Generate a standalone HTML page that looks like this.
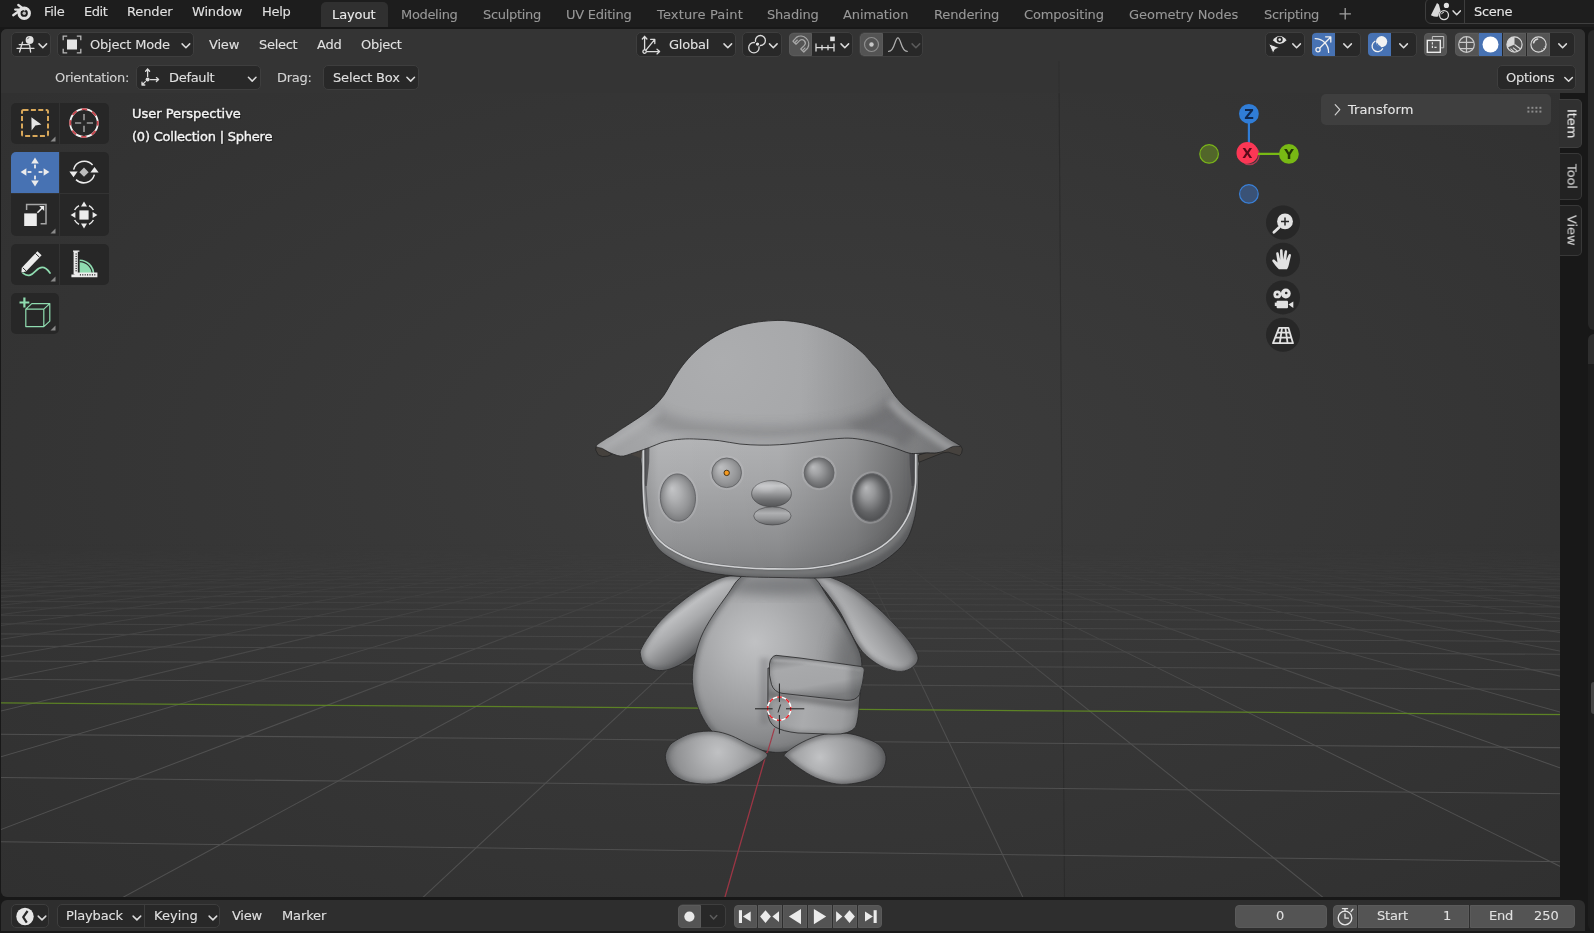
<!DOCTYPE html>
<html lang="en"><head><meta charset="utf-8"><title>Blender</title>
<style>
*{box-sizing:border-box;margin:0;padding:0}
html,body{width:1594px;height:933px;overflow:hidden;background:#181818}
body{position:relative;font-family:"DejaVu Sans","Liberation Sans",sans-serif;font-size:13px;color:#e0e0e0;line-height:16px;letter-spacing:-.1px}
.a{position:absolute}
.t{position:absolute;white-space:nowrap;height:16px;line-height:16px;will-change:transform;-webkit-text-stroke:.1px currentColor}
.dim{color:#989898}
.btn{position:absolute;background:#282828;border:1px solid #3e3e3e;border-radius:5px}
.lbtn{position:absolute;background:#545454;border:1px solid #5a5a5a}
.blue{position:absolute;background:#4772b3}
svg{position:absolute;overflow:visible}
.ic{fill:none;stroke:#dcdcdc;stroke-width:1.3;stroke-linecap:round;stroke-linejoin:round}
.chev{fill:none;stroke:#dcdcdc;stroke-width:1.5;stroke-linecap:round;stroke-linejoin:round}
#vp{position:absolute;left:1px;top:29px;width:1584px;height:868px;border-radius:6px;background:radial-gradient(#3d3d3d,#303030);overflow:hidden}
#tl{position:absolute;left:1px;top:900px;width:1584px;height:31px;border-radius:6px 6px 0 0;background:#2e2e2e;overflow:hidden}
.tool{position:absolute;background:#272727}
</style></head><body>
<div class="a" style="left:0;top:0;width:1594px;height:26.6px;background:#1d1d1d"></div>
<svg style="left:11px;top:2px" width="22" height="19" viewBox="0 0 22 19">
<g fill="none" stroke="#e0e0e0" stroke-linecap="round">
<circle cx="13.2" cy="11.2" r="5.2" stroke-width="3.1"/>
<path d="M2.2 13.2 L10.5 7.2 M4.2 7.6 L11 7.6 M7.3 3.0 L13.6 7.6" stroke-width="2.3"/>
</g><circle cx="13.2" cy="11.2" r="1.7" fill="#bdbdbd"/></svg>
<div class="t " style="left:44.1px;top:3.5px;letter-spacing:-0.316px;">File</div>
<div class="t " style="left:84.0px;top:3.5px;letter-spacing:-0.447px;">Edit</div>
<div class="t " style="left:126.9px;top:3.5px;letter-spacing:-0.130px;">Render</div>
<div class="t " style="left:191.9px;top:3.5px;letter-spacing:-0.178px;">Window</div>
<div class="t " style="left:261.9px;top:3.5px;letter-spacing:-0.285px;">Help</div>
<div class="a" style="left:320.8px;top:2px;width:67.2px;height:24.8px;background:#303030;border-radius:5px 5px 0 0"></div>
<div class="t " style="left:331.9px;top:6.5px;letter-spacing:-0.117px;color:#ececec">Layout</div>
<div class="t dim" style="left:401.0px;top:6.5px;letter-spacing:-0.330px;">Modeling</div>
<div class="t dim" style="left:482.8px;top:6.5px;letter-spacing:-0.300px;">Sculpting</div>
<div class="t dim" style="left:565.9px;top:6.5px;letter-spacing:-0.233px;">UV Editing</div>
<div class="t dim" style="left:656.5px;top:6.5px;letter-spacing:0.155px;">Texture Paint</div>
<div class="t dim" style="left:767.4px;top:6.5px;letter-spacing:-0.188px;">Shading</div>
<div class="t dim" style="left:843.4px;top:6.5px;letter-spacing:-0.109px;">Animation</div>
<div class="t dim" style="left:933.6px;top:6.5px;letter-spacing:-0.132px;">Rendering</div>
<div class="t dim" style="left:1023.7px;top:6.5px;letter-spacing:-0.155px;">Compositing</div>
<div class="t dim" style="left:1128.6px;top:6.5px;letter-spacing:-0.033px;">Geometry Nodes</div>
<div class="t dim" style="left:1263.6px;top:6.5px;letter-spacing:-0.312px;">Scripting</div>
<svg style="left:0;top:0" width="1" height="1"><path d="M1339.5 13.8h11.4M1345.2 8.1v11.4" stroke="#a0a0a0" stroke-width="1.3" fill="none"/></svg>
<div class="a" style="left:1425.4px;top:-2px;width:180px;height:25.8px;background:#1e1e1e;border:1px solid #3e3e3e;border-radius:6px"></div>
<div class="a" style="left:1464.2px;top:0;width:1px;height:23px;background:#3e3e3e"></div>
<svg style="left:0;top:0" width="1" height="1">
<path d="M1437 3 L1438.9 4.6 L1440.6 11 Q1438.6 12.4 1438.3 16.2 Q1436 17.6 1430.9 15.2 Z" fill="#dadada"/>
<circle cx="1446.4" cy="5.4" r="2.6" fill="#e2e2e2"/>
<circle cx="1444" cy="15.1" r="4.5" fill="#1e1e1e" stroke="#dadada" stroke-width="1.3"/>
<path d="M1441.6 14.2 a2.6 2.6 0 0 1 2.3 -2" stroke="#dadada" stroke-width="1" fill="none"/></svg>
<svg class="a" style="left:0;top:0" width="1" height="1"><path class="chev" style="" d="M1453.1 10.9 l3.6 3.8 l3.6 -3.8"/></svg>
<div class="t " style="left:1474.1px;top:3.7px;letter-spacing:-0.268px;color:#e6e6e6">Scene</div><div id="vp"><svg style="left:-1px;top:-29px" width="1594" height="933" viewBox="0 0 1594 933">
<defs>
<linearGradient id="gfg" gradientUnits="userSpaceOnUse" x1="0" y1="515" x2="0" y2="760"><stop offset="0" stop-color="#000"/><stop offset=".12" stop-color="#000"/><stop offset=".19" stop-color="#161616"/><stop offset=".35" stop-color="#5c5c5c"/><stop offset=".56" stop-color="#b4b4b4"/><stop offset=".85" stop-color="#fff"/></linearGradient>
<mask id="gfade" maskUnits="userSpaceOnUse" x="0" y="500" width="1594" height="433"><rect x="0" y="500" width="1594" height="433" fill="url(#gfg)"/></mask>
<mask id="gfade2" maskUnits="userSpaceOnUse" x="0" y="500" width="1594" height="433"><rect x="0" y="500" width="1594" height="433" fill="url(#gfg)"/></mask>
</defs>
<line x1="1058.9" y1="61" x2="1064.5" y2="897" stroke="#262626" stroke-width="1.1" opacity=".6"/>
<g stroke="#505050" stroke-width="1.05" mask="url(#gfade)"><line x1="776.2" y1="511.4" x2="-20.0" y2="524.2"/><line x1="777.0" y1="511.4" x2="-20.0" y2="524.4"/><line x1="777.7" y1="511.4" x2="-20.0" y2="524.6"/><line x1="778.5" y1="511.4" x2="-20.0" y2="524.7"/><line x1="779.3" y1="511.4" x2="-20.0" y2="524.9"/><line x1="780.1" y1="511.4" x2="-20.0" y2="525.1"/><line x1="780.8" y1="511.4" x2="-20.0" y2="525.3"/><line x1="781.6" y1="511.4" x2="-20.0" y2="525.5"/><line x1="782.4" y1="511.4" x2="-20.0" y2="525.7"/><line x1="783.2" y1="511.4" x2="-20.0" y2="525.9"/><line x1="783.9" y1="511.4" x2="-20.0" y2="526.2"/><line x1="784.7" y1="511.4" x2="-20.0" y2="526.4"/><line x1="785.5" y1="511.4" x2="-20.0" y2="526.6"/><line x1="786.3" y1="511.4" x2="-20.0" y2="526.9"/><line x1="787.0" y1="511.4" x2="-20.0" y2="527.1"/><line x1="787.8" y1="511.4" x2="-20.0" y2="527.4"/><line x1="788.6" y1="511.4" x2="-20.0" y2="527.6"/><line x1="789.4" y1="511.4" x2="-20.0" y2="527.9"/><line x1="790.1" y1="511.4" x2="-20.0" y2="528.2"/><line x1="790.9" y1="511.4" x2="-20.0" y2="528.5"/><line x1="791.7" y1="511.4" x2="-20.0" y2="528.8"/><line x1="792.5" y1="511.4" x2="-20.0" y2="529.1"/><line x1="793.2" y1="511.4" x2="-20.0" y2="529.4"/><line x1="794.0" y1="511.4" x2="-20.0" y2="529.7"/><line x1="794.8" y1="511.4" x2="-20.0" y2="530.1"/><line x1="795.6" y1="511.4" x2="-20.0" y2="530.4"/><line x1="796.3" y1="511.4" x2="-20.0" y2="530.8"/><line x1="797.1" y1="511.4" x2="-20.0" y2="531.2"/><line x1="797.9" y1="511.4" x2="-20.0" y2="531.6"/><line x1="798.7" y1="511.4" x2="-20.0" y2="532.0"/><line x1="799.4" y1="511.4" x2="-20.0" y2="532.4"/><line x1="800.2" y1="511.4" x2="-20.0" y2="532.9"/><line x1="801.0" y1="511.4" x2="-20.0" y2="533.3"/><line x1="801.8" y1="511.4" x2="-20.0" y2="533.8"/><line x1="802.5" y1="511.4" x2="-20.0" y2="534.3"/><line x1="803.3" y1="511.4" x2="-20.0" y2="534.8"/><line x1="804.1" y1="511.4" x2="-20.0" y2="535.4"/><line x1="804.9" y1="511.4" x2="-20.0" y2="536.0"/><line x1="805.6" y1="511.4" x2="-20.0" y2="536.6"/><line x1="806.4" y1="511.4" x2="-20.0" y2="537.2"/><line x1="807.2" y1="511.4" x2="-20.0" y2="537.8"/><line x1="808.0" y1="511.4" x2="-20.0" y2="538.5"/><line x1="808.7" y1="511.4" x2="-20.0" y2="539.3"/><line x1="809.5" y1="511.4" x2="-20.0" y2="540.0"/><line x1="810.3" y1="511.4" x2="-20.0" y2="540.9"/><line x1="811.1" y1="511.4" x2="-20.0" y2="541.7"/><line x1="811.8" y1="511.4" x2="-20.0" y2="542.6"/><line x1="812.6" y1="511.4" x2="-20.0" y2="543.6"/><line x1="813.4" y1="511.4" x2="-20.0" y2="544.6"/><line x1="814.2" y1="511.4" x2="-20.0" y2="545.7"/><line x1="815.0" y1="511.4" x2="-20.0" y2="546.9"/><line x1="815.7" y1="511.4" x2="-20.0" y2="548.1"/><line x1="816.5" y1="511.4" x2="-20.0" y2="549.4"/><line x1="817.3" y1="511.4" x2="-20.0" y2="550.9"/><line x1="818.1" y1="511.4" x2="-20.0" y2="552.4"/><line x1="818.8" y1="511.4" x2="-20.0" y2="554.0"/><line x1="819.6" y1="511.4" x2="-20.0" y2="555.8"/><line x1="820.4" y1="511.4" x2="-20.0" y2="557.8"/><line x1="821.2" y1="511.4" x2="-20.0" y2="559.9"/><line x1="821.9" y1="511.4" x2="-20.0" y2="562.2"/><line x1="822.7" y1="511.4" x2="-20.0" y2="564.7"/><line x1="823.5" y1="511.4" x2="-20.0" y2="567.5"/><line x1="824.3" y1="511.4" x2="-20.0" y2="570.7"/><line x1="825.0" y1="511.4" x2="-20.0" y2="574.1"/><line x1="825.8" y1="511.4" x2="-20.0" y2="578.0"/><line x1="826.6" y1="511.4" x2="-20.0" y2="582.4"/><line x1="827.4" y1="511.4" x2="-20.0" y2="587.4"/><line x1="828.1" y1="511.4" x2="-20.0" y2="593.2"/><line x1="828.9" y1="511.4" x2="-20.0" y2="599.8"/><line x1="829.7" y1="511.4" x2="-20.0" y2="607.7"/><line x1="830.5" y1="511.4" x2="-20.0" y2="617.1"/><line x1="831.2" y1="511.4" x2="-20.0" y2="628.4"/><line x1="832.0" y1="511.4" x2="-20.0" y2="642.5"/><line x1="832.8" y1="511.4" x2="-20.0" y2="660.4"/><line x1="833.6" y1="511.4" x2="-20.0" y2="683.8"/><line x1="834.3" y1="511.4" x2="-20.0" y2="716.0"/><line x1="835.1" y1="511.4" x2="-20.0" y2="762.9"/><line x1="835.9" y1="511.4" x2="-20.0" y2="837.5"/><line x1="836.7" y1="511.4" x2="7.1" y2="960.0"/><line x1="837.4" y1="511.4" x2="355.7" y2="960.0"/><line x1="839.0" y1="511.4" x2="1052.8" y2="960.0"/><line x1="839.8" y1="511.4" x2="1401.4" y2="960.0"/><line x1="840.5" y1="511.4" x2="1620.0" y2="895.9"/><line x1="841.3" y1="511.4" x2="1620.0" y2="789.3"/><line x1="842.1" y1="511.4" x2="1620.0" y2="728.8"/><line x1="842.9" y1="511.4" x2="1620.0" y2="689.9"/><line x1="843.6" y1="511.4" x2="1620.0" y2="662.8"/><line x1="844.4" y1="511.4" x2="1620.0" y2="642.8"/><line x1="845.2" y1="511.4" x2="1620.0" y2="627.4"/><line x1="846.0" y1="511.4" x2="1620.0" y2="615.3"/><line x1="846.7" y1="511.4" x2="1620.0" y2="605.4"/><line x1="847.5" y1="511.4" x2="1620.0" y2="597.2"/><line x1="848.3" y1="511.4" x2="1620.0" y2="590.3"/><line x1="849.1" y1="511.4" x2="1620.0" y2="584.5"/><line x1="849.8" y1="511.4" x2="1620.0" y2="579.4"/><line x1="850.6" y1="511.4" x2="1620.0" y2="575.0"/><line x1="851.4" y1="511.4" x2="1620.0" y2="571.1"/><line x1="852.2" y1="511.4" x2="1620.0" y2="567.7"/><line x1="852.9" y1="511.4" x2="1620.0" y2="564.6"/><line x1="853.7" y1="511.4" x2="1620.0" y2="561.8"/><line x1="854.5" y1="511.4" x2="1620.0" y2="559.3"/><line x1="855.3" y1="511.4" x2="1620.0" y2="557.1"/><line x1="856.0" y1="511.4" x2="1620.0" y2="555.0"/><line x1="856.8" y1="511.4" x2="1620.0" y2="553.1"/><line x1="857.6" y1="511.4" x2="1620.0" y2="551.4"/><line x1="858.4" y1="511.4" x2="1620.0" y2="549.8"/><line x1="859.1" y1="511.4" x2="1620.0" y2="548.3"/><line x1="859.9" y1="511.4" x2="1620.0" y2="546.9"/><line x1="860.7" y1="511.4" x2="1620.0" y2="545.7"/><line x1="861.5" y1="511.4" x2="1620.0" y2="544.5"/><line x1="862.2" y1="511.4" x2="1620.0" y2="543.4"/><line x1="863.0" y1="511.4" x2="1620.0" y2="542.3"/><line x1="863.8" y1="511.4" x2="1620.0" y2="541.3"/><line x1="864.6" y1="511.4" x2="1620.0" y2="540.4"/><line x1="865.3" y1="511.4" x2="1620.0" y2="539.5"/><line x1="866.1" y1="511.4" x2="1620.0" y2="538.7"/><line x1="866.9" y1="511.4" x2="1620.0" y2="538.0"/><line x1="867.7" y1="511.4" x2="1620.0" y2="537.2"/><line x1="868.4" y1="511.4" x2="1620.0" y2="536.5"/><line x1="869.2" y1="511.4" x2="1620.0" y2="535.9"/><line x1="870.0" y1="511.4" x2="1620.0" y2="535.2"/><line x1="870.8" y1="511.4" x2="1620.0" y2="534.6"/><line x1="871.5" y1="511.4" x2="1620.0" y2="534.1"/><line x1="872.3" y1="511.4" x2="1620.0" y2="533.5"/><line x1="873.1" y1="511.4" x2="1620.0" y2="533.0"/><line x1="873.9" y1="511.4" x2="1620.0" y2="532.5"/><line x1="874.7" y1="511.4" x2="1620.0" y2="532.1"/><line x1="875.4" y1="511.4" x2="1620.0" y2="531.6"/><line x1="876.2" y1="511.4" x2="1620.0" y2="531.2"/><line x1="877.0" y1="511.4" x2="1620.0" y2="530.7"/><line x1="877.8" y1="511.4" x2="1620.0" y2="530.3"/><line x1="878.5" y1="511.4" x2="1620.0" y2="530.0"/><line x1="879.3" y1="511.4" x2="1620.0" y2="529.6"/><line x1="880.1" y1="511.4" x2="1620.0" y2="529.2"/><line x1="880.9" y1="511.4" x2="1620.0" y2="528.9"/><line x1="881.6" y1="511.4" x2="1620.0" y2="528.6"/><line x1="882.4" y1="511.4" x2="1620.0" y2="528.2"/><line x1="883.2" y1="511.4" x2="1620.0" y2="527.9"/><line x1="884.0" y1="511.4" x2="1620.0" y2="527.6"/><line x1="884.7" y1="511.4" x2="1620.0" y2="527.3"/><line x1="885.5" y1="511.4" x2="1620.0" y2="527.1"/><line x1="886.3" y1="511.4" x2="1620.0" y2="526.8"/><line x1="887.1" y1="511.4" x2="1620.0" y2="526.5"/><line x1="887.8" y1="511.4" x2="1620.0" y2="526.3"/><line x1="888.6" y1="511.4" x2="1620.0" y2="526.0"/><line x1="889.4" y1="511.4" x2="1620.0" y2="525.8"/><line x1="890.2" y1="511.4" x2="1620.0" y2="525.6"/><line x1="890.9" y1="511.4" x2="1620.0" y2="525.3"/><line x1="891.7" y1="511.4" x2="1620.0" y2="525.1"/><line x1="892.5" y1="511.4" x2="1620.0" y2="524.9"/><line x1="893.3" y1="511.4" x2="1620.0" y2="524.7"/><line x1="894.0" y1="511.4" x2="1620.0" y2="524.5"/><line x1="894.8" y1="511.4" x2="1620.0" y2="524.3"/><line x1="895.6" y1="511.4" x2="1620.0" y2="524.1"/><line x1="896.4" y1="511.4" x2="1620.0" y2="523.9"/><line x1="897.1" y1="511.4" x2="1620.0" y2="523.8"/><line x1="897.9" y1="511.4" x2="1620.0" y2="523.6"/><line x1="898.7" y1="511.4" x2="1620.0" y2="523.4"/><line x1="899.5" y1="511.4" x2="1620.0" y2="523.3"/><line x1="900.2" y1="511.4" x2="1620.0" y2="523.1"/><line x1="-20.0" y1="517.1" x2="1620.0" y2="517.5"/><line x1="-20.0" y1="517.1" x2="1620.0" y2="517.5"/><line x1="-20.0" y1="517.1" x2="1620.0" y2="517.6"/><line x1="-20.0" y1="517.2" x2="1620.0" y2="517.6"/><line x1="-20.0" y1="517.2" x2="1620.0" y2="517.6"/><line x1="-20.0" y1="517.2" x2="1620.0" y2="517.7"/><line x1="-20.0" y1="517.3" x2="1620.0" y2="517.7"/><line x1="-20.0" y1="517.3" x2="1620.0" y2="517.7"/><line x1="-20.0" y1="517.3" x2="1620.0" y2="517.8"/><line x1="-20.0" y1="517.4" x2="1620.0" y2="517.8"/><line x1="-20.0" y1="517.4" x2="1620.0" y2="517.9"/><line x1="-20.0" y1="517.4" x2="1620.0" y2="517.9"/><line x1="-20.0" y1="517.5" x2="1620.0" y2="517.9"/><line x1="-20.0" y1="517.5" x2="1620.0" y2="518.0"/><line x1="-20.0" y1="517.6" x2="1620.0" y2="518.0"/><line x1="-20.0" y1="517.6" x2="1620.0" y2="518.0"/><line x1="-20.0" y1="517.6" x2="1620.0" y2="518.1"/><line x1="-20.0" y1="517.7" x2="1620.0" y2="518.1"/><line x1="-20.0" y1="517.7" x2="1620.0" y2="518.2"/><line x1="-20.0" y1="517.7" x2="1620.0" y2="518.2"/><line x1="-20.0" y1="517.8" x2="1620.0" y2="518.3"/><line x1="-20.0" y1="517.8" x2="1620.0" y2="518.3"/><line x1="-20.0" y1="517.9" x2="1620.0" y2="518.3"/><line x1="-20.0" y1="517.9" x2="1620.0" y2="518.4"/><line x1="-20.0" y1="517.9" x2="1620.0" y2="518.4"/><line x1="-20.0" y1="518.0" x2="1620.0" y2="518.5"/><line x1="-20.0" y1="518.0" x2="1620.0" y2="518.5"/><line x1="-20.0" y1="518.1" x2="1620.0" y2="518.6"/><line x1="-20.0" y1="518.1" x2="1620.0" y2="518.6"/><line x1="-20.0" y1="518.2" x2="1620.0" y2="518.6"/><line x1="-20.0" y1="518.2" x2="1620.0" y2="518.7"/><line x1="-20.0" y1="518.2" x2="1620.0" y2="518.7"/><line x1="-20.0" y1="518.3" x2="1620.0" y2="518.8"/><line x1="-20.0" y1="518.3" x2="1620.0" y2="518.8"/><line x1="-20.0" y1="518.4" x2="1620.0" y2="518.9"/><line x1="-20.0" y1="518.4" x2="1620.0" y2="518.9"/><line x1="-20.0" y1="518.5" x2="1620.0" y2="519.0"/><line x1="-20.0" y1="518.5" x2="1620.0" y2="519.0"/><line x1="-20.0" y1="518.6" x2="1620.0" y2="519.1"/><line x1="-20.0" y1="518.6" x2="1620.0" y2="519.1"/><line x1="-20.0" y1="518.7" x2="1620.0" y2="519.2"/><line x1="-20.0" y1="518.7" x2="1620.0" y2="519.2"/><line x1="-20.0" y1="518.8" x2="1620.0" y2="519.3"/><line x1="-20.0" y1="518.8" x2="1620.0" y2="519.3"/><line x1="-20.0" y1="518.9" x2="1620.0" y2="519.4"/><line x1="-20.0" y1="518.9" x2="1620.0" y2="519.5"/><line x1="-20.0" y1="519.0" x2="1620.0" y2="519.5"/><line x1="-20.0" y1="519.0" x2="1620.0" y2="519.6"/><line x1="-20.0" y1="519.1" x2="1620.0" y2="519.6"/><line x1="-20.0" y1="519.1" x2="1620.0" y2="519.7"/><line x1="-20.0" y1="519.2" x2="1620.0" y2="519.7"/><line x1="-20.0" y1="519.2" x2="1620.0" y2="519.8"/><line x1="-20.0" y1="519.3" x2="1620.0" y2="519.9"/><line x1="-20.0" y1="519.4" x2="1620.0" y2="519.9"/><line x1="-20.0" y1="519.4" x2="1620.0" y2="520.0"/><line x1="-20.0" y1="519.5" x2="1620.0" y2="520.1"/><line x1="-20.0" y1="519.5" x2="1620.0" y2="520.1"/><line x1="-20.0" y1="519.6" x2="1620.0" y2="520.2"/><line x1="-20.0" y1="519.7" x2="1620.0" y2="520.2"/><line x1="-20.0" y1="519.7" x2="1620.0" y2="520.3"/><line x1="-20.0" y1="519.8" x2="1620.0" y2="520.4"/><line x1="-20.0" y1="519.8" x2="1620.0" y2="520.4"/><line x1="-20.0" y1="519.9" x2="1620.0" y2="520.5"/><line x1="-20.0" y1="520.0" x2="1620.0" y2="520.6"/><line x1="-20.0" y1="520.0" x2="1620.0" y2="520.7"/><line x1="-20.0" y1="520.1" x2="1620.0" y2="520.7"/><line x1="-20.0" y1="520.2" x2="1620.0" y2="520.8"/><line x1="-20.0" y1="520.3" x2="1620.0" y2="520.9"/><line x1="-20.0" y1="520.3" x2="1620.0" y2="521.0"/><line x1="-20.0" y1="520.4" x2="1620.0" y2="521.0"/><line x1="-20.0" y1="520.5" x2="1620.0" y2="521.1"/><line x1="-20.0" y1="520.5" x2="1620.0" y2="521.2"/><line x1="-20.0" y1="520.6" x2="1620.0" y2="521.3"/><line x1="-20.0" y1="520.7" x2="1620.0" y2="521.3"/><line x1="-20.0" y1="520.8" x2="1620.0" y2="521.4"/><line x1="-20.0" y1="520.8" x2="1620.0" y2="521.5"/><line x1="-20.0" y1="520.9" x2="1620.0" y2="521.6"/><line x1="-20.0" y1="521.0" x2="1620.0" y2="521.7"/><line x1="-20.0" y1="521.1" x2="1620.0" y2="521.8"/><line x1="-20.0" y1="521.2" x2="1620.0" y2="521.9"/><line x1="-20.0" y1="521.3" x2="1620.0" y2="521.9"/><line x1="-20.0" y1="521.3" x2="1620.0" y2="522.0"/><line x1="-20.0" y1="521.4" x2="1620.0" y2="522.1"/><line x1="-20.0" y1="521.5" x2="1620.0" y2="522.2"/><line x1="-20.0" y1="521.6" x2="1620.0" y2="522.3"/><line x1="-20.0" y1="521.7" x2="1620.0" y2="522.4"/><line x1="-20.0" y1="521.8" x2="1620.0" y2="522.5"/><line x1="-20.0" y1="521.9" x2="1620.0" y2="522.6"/><line x1="-20.0" y1="522.0" x2="1620.0" y2="522.7"/><line x1="-20.0" y1="522.1" x2="1620.0" y2="522.8"/><line x1="-20.0" y1="522.2" x2="1620.0" y2="522.9"/><line x1="-20.0" y1="522.3" x2="1620.0" y2="523.0"/><line x1="-20.0" y1="522.4" x2="1620.0" y2="523.1"/><line x1="-20.0" y1="522.5" x2="1620.0" y2="523.3"/><line x1="-20.0" y1="522.6" x2="1620.0" y2="523.4"/><line x1="-20.0" y1="522.7" x2="1620.0" y2="523.5"/><line x1="-20.0" y1="522.8" x2="1620.0" y2="523.6"/><line x1="-20.0" y1="522.9" x2="1620.0" y2="523.7"/><line x1="-20.0" y1="523.0" x2="1620.0" y2="523.8"/><line x1="-20.0" y1="523.2" x2="1620.0" y2="524.0"/><line x1="-20.0" y1="523.3" x2="1620.0" y2="524.1"/><line x1="-20.0" y1="523.4" x2="1620.0" y2="524.2"/><line x1="-20.0" y1="523.5" x2="1620.0" y2="524.4"/><line x1="-20.0" y1="523.6" x2="1620.0" y2="524.5"/><line x1="-20.0" y1="523.8" x2="1620.0" y2="524.6"/><line x1="-20.0" y1="523.9" x2="1620.0" y2="524.8"/><line x1="-20.0" y1="524.0" x2="1620.0" y2="524.9"/><line x1="-20.0" y1="524.2" x2="1620.0" y2="525.0"/><line x1="-20.0" y1="524.3" x2="1620.0" y2="525.2"/><line x1="-20.0" y1="524.5" x2="1620.0" y2="525.3"/><line x1="-20.0" y1="524.6" x2="1620.0" y2="525.5"/><line x1="-20.0" y1="524.7" x2="1620.0" y2="525.7"/><line x1="-20.0" y1="524.9" x2="1620.0" y2="525.8"/><line x1="-20.0" y1="525.1" x2="1620.0" y2="526.0"/><line x1="-20.0" y1="525.2" x2="1620.0" y2="526.1"/><line x1="-20.0" y1="525.4" x2="1620.0" y2="526.3"/><line x1="-20.0" y1="525.5" x2="1620.0" y2="526.5"/><line x1="-20.0" y1="525.7" x2="1620.0" y2="526.7"/><line x1="-20.0" y1="525.9" x2="1620.0" y2="526.9"/><line x1="-20.0" y1="526.0" x2="1620.0" y2="527.0"/><line x1="-20.0" y1="526.2" x2="1620.0" y2="527.2"/><line x1="-20.0" y1="526.4" x2="1620.0" y2="527.4"/><line x1="-20.0" y1="526.6" x2="1620.0" y2="527.6"/><line x1="-20.0" y1="526.8" x2="1620.0" y2="527.8"/><line x1="-20.0" y1="527.0" x2="1620.0" y2="528.0"/><line x1="-20.0" y1="527.2" x2="1620.0" y2="528.3"/><line x1="-20.0" y1="527.4" x2="1620.0" y2="528.5"/><line x1="-20.0" y1="527.6" x2="1620.0" y2="528.7"/><line x1="-20.0" y1="527.8" x2="1620.0" y2="528.9"/><line x1="-20.0" y1="528.0" x2="1620.0" y2="529.2"/><line x1="-20.0" y1="528.3" x2="1620.0" y2="529.4"/><line x1="-20.0" y1="528.5" x2="1620.0" y2="529.7"/><line x1="-20.0" y1="528.7" x2="1620.0" y2="529.9"/><line x1="-20.0" y1="529.0" x2="1620.0" y2="530.2"/><line x1="-20.0" y1="529.2" x2="1620.0" y2="530.4"/><line x1="-20.0" y1="529.5" x2="1620.0" y2="530.7"/><line x1="-20.0" y1="529.8" x2="1620.0" y2="531.0"/><line x1="-20.0" y1="530.1" x2="1620.0" y2="531.3"/><line x1="-20.0" y1="530.3" x2="1620.0" y2="531.6"/><line x1="-20.0" y1="530.6" x2="1620.0" y2="531.9"/><line x1="-20.0" y1="530.9" x2="1620.0" y2="532.2"/><line x1="-20.0" y1="531.2" x2="1620.0" y2="532.6"/><line x1="-20.0" y1="531.6" x2="1620.0" y2="532.9"/><line x1="-20.0" y1="531.9" x2="1620.0" y2="533.3"/><line x1="-20.0" y1="532.2" x2="1620.0" y2="533.6"/><line x1="-20.0" y1="532.6" x2="1620.0" y2="534.0"/><line x1="-20.0" y1="532.9" x2="1620.0" y2="534.4"/><line x1="-20.0" y1="533.3" x2="1620.0" y2="534.8"/><line x1="-20.0" y1="533.7" x2="1620.0" y2="535.2"/><line x1="-20.0" y1="534.1" x2="1620.0" y2="535.6"/><line x1="-20.0" y1="534.5" x2="1620.0" y2="536.0"/><line x1="-20.0" y1="534.9" x2="1620.0" y2="536.5"/><line x1="-20.0" y1="535.4" x2="1620.0" y2="537.0"/><line x1="-20.0" y1="535.9" x2="1620.0" y2="537.5"/><line x1="-20.0" y1="536.3" x2="1620.0" y2="538.0"/><line x1="-20.0" y1="536.8" x2="1620.0" y2="538.5"/><line x1="-20.0" y1="537.3" x2="1620.0" y2="539.0"/><line x1="-20.0" y1="537.9" x2="1620.0" y2="539.6"/><line x1="-20.0" y1="538.4" x2="1620.0" y2="540.2"/><line x1="-20.0" y1="539.0" x2="1620.0" y2="540.8"/><line x1="-20.0" y1="539.6" x2="1620.0" y2="541.5"/><line x1="-20.0" y1="540.3" x2="1620.0" y2="542.2"/><line x1="-20.0" y1="540.9" x2="1620.0" y2="542.9"/><line x1="-20.0" y1="541.6" x2="1620.0" y2="543.6"/><line x1="-20.0" y1="542.3" x2="1620.0" y2="544.4"/><line x1="-20.0" y1="543.1" x2="1620.0" y2="545.2"/><line x1="-20.0" y1="543.9" x2="1620.0" y2="546.0"/><line x1="-20.0" y1="544.7" x2="1620.0" y2="546.9"/><line x1="-20.0" y1="545.6" x2="1620.0" y2="547.8"/><line x1="-20.0" y1="546.5" x2="1620.0" y2="548.8"/><line x1="-20.0" y1="547.5" x2="1620.0" y2="549.8"/><line x1="-20.0" y1="548.5" x2="1620.0" y2="550.9"/><line x1="-20.0" y1="549.6" x2="1620.0" y2="552.1"/><line x1="-20.0" y1="550.7" x2="1620.0" y2="553.3"/><line x1="-20.0" y1="551.9" x2="1620.0" y2="554.6"/><line x1="-20.0" y1="553.2" x2="1620.0" y2="556.0"/><line x1="-20.0" y1="554.6" x2="1620.0" y2="557.4"/><line x1="-20.0" y1="556.1" x2="1620.0" y2="559.0"/><line x1="-20.0" y1="557.6" x2="1620.0" y2="560.6"/><line x1="-20.0" y1="559.3" x2="1620.0" y2="562.4"/><line x1="-20.0" y1="561.1" x2="1620.0" y2="564.3"/><line x1="-20.0" y1="563.1" x2="1620.0" y2="566.4"/><line x1="-20.0" y1="565.2" x2="1620.0" y2="568.6"/><line x1="-20.0" y1="567.4" x2="1620.0" y2="571.0"/><line x1="-20.0" y1="569.9" x2="1620.0" y2="573.7"/><line x1="-20.0" y1="572.6" x2="1620.0" y2="576.5"/><line x1="-20.0" y1="575.5" x2="1620.0" y2="579.6"/><line x1="-20.0" y1="578.7" x2="1620.0" y2="583.1"/><line x1="-20.0" y1="582.3" x2="1620.0" y2="586.9"/><line x1="-20.0" y1="586.2" x2="1620.0" y2="591.1"/><line x1="-20.0" y1="590.7" x2="1620.0" y2="595.8"/><line x1="-20.0" y1="595.6" x2="1620.0" y2="601.0"/><line x1="-20.0" y1="601.3" x2="1620.0" y2="607.0"/><line x1="-20.0" y1="607.7" x2="1620.0" y2="613.8"/><line x1="-20.0" y1="615.1" x2="1620.0" y2="621.7"/><line x1="-20.0" y1="623.7" x2="1620.0" y2="630.9"/><line x1="-20.0" y1="633.8" x2="1620.0" y2="641.6"/><line x1="-20.0" y1="646.0" x2="1620.0" y2="654.6"/><line x1="-20.0" y1="660.8" x2="1620.0" y2="670.3"/><line x1="-20.0" y1="679.2" x2="1620.0" y2="689.9"/><line x1="-20.0" y1="734.0" x2="1620.0" y2="748.2"/><line x1="-20.0" y1="777.3" x2="1620.0" y2="794.3"/><line x1="-20.0" y1="841.5" x2="1620.0" y2="862.5"/><line x1="-20.0" y1="946.4" x2="788.5" y2="960.0"/></g><g mask="url(#gfade2)"><line x1="-20.0" y1="702.8" x2="1620.0" y2="715.0" stroke="#5f8724" stroke-width="1.25"/><line x1="779.3" y1="708.7" x2="723.7" y2="901.5" stroke="#9c3645" stroke-width="1.3"/></g>
<defs><filter id="b1" x="-40%" y="-40%" width="180%" height="180%"><feGaussianBlur stdDeviation="1"/></filter><filter id="b2" x="-40%" y="-40%" width="180%" height="180%"><feGaussianBlur stdDeviation="2"/></filter><filter id="b3" x="-40%" y="-40%" width="180%" height="180%"><feGaussianBlur stdDeviation="3"/></filter><filter id="b4" x="-40%" y="-40%" width="180%" height="180%"><feGaussianBlur stdDeviation="4"/></filter><filter id="b6" x="-40%" y="-40%" width="180%" height="180%"><feGaussianBlur stdDeviation="6"/></filter><filter id="b9" x="-40%" y="-40%" width="180%" height="180%"><feGaussianBlur stdDeviation="9"/></filter><filter id="b14" x="-40%" y="-40%" width="180%" height="180%"><feGaussianBlur stdDeviation="14"/></filter><radialGradient id="gHat" gradientUnits="userSpaceOnUse" cx="722" cy="362" r="255"><stop offset="0" stop-color="#acadaf"/><stop offset="0.35" stop-color="#a7a8aa"/><stop offset="0.65" stop-color="#9c9d9f"/><stop offset="1" stop-color="#88898b"/></radialGradient><linearGradient id="gHatR" gradientUnits="userSpaceOnUse" x1="800" y1="0" x2="965" y2="0"><stop offset="0" stop-color="#000" stop-opacity="0"/><stop offset=".5" stop-color="#000" stop-opacity=".1"/><stop offset="1" stop-color="#000" stop-opacity=".2"/></linearGradient><linearGradient id="gFaceV" gradientUnits="userSpaceOnUse" x1="0" y1="440" x2="0" y2="570"><stop offset="0" stop-color="#b4b5b7"/><stop offset="0.3" stop-color="#aaabad"/><stop offset="0.6" stop-color="#9c9d9f"/><stop offset="0.85" stop-color="#8e8f91"/><stop offset="1" stop-color="#828385"/></linearGradient><linearGradient id="gFaceH" gradientUnits="userSpaceOnUse" x1="642" y1="0" x2="916" y2="0"><stop offset="0" stop-color="#000" stop-opacity=".12"/><stop offset=".06" stop-color="#000" stop-opacity="0"/><stop offset=".5" stop-color="#000" stop-opacity=".03"/><stop offset=".78" stop-color="#000" stop-opacity=".18"/><stop offset="1" stop-color="#000" stop-opacity=".42"/></linearGradient><radialGradient id="gBody" gradientUnits="userSpaceOnUse" cx="755" cy="642" r="122"><stop offset="0" stop-color="#c0c1c3"/><stop offset="0.25" stop-color="#b2b3b5"/><stop offset="0.6" stop-color="#9a9b9d"/><stop offset="1" stop-color="#747577"/></radialGradient><linearGradient id="gArmL" gradientUnits="userSpaceOnUse" x1="662" y1="604" x2="696" y2="650"><stop offset="0" stop-color="#929395"/><stop offset="0.32" stop-color="#bebfc1"/><stop offset="0.55" stop-color="#a8a9ab"/><stop offset="0.8" stop-color="#848587"/><stop offset="1" stop-color="#68696b"/></linearGradient><linearGradient id="gArmR" gradientUnits="userSpaceOnUse" x1="852" y1="650" x2="902" y2="612"><stop offset="0" stop-color="#969799"/><stop offset="0.2" stop-color="#b8b9bb"/><stop offset="0.45" stop-color="#a2a3a5"/><stop offset="0.75" stop-color="#808183"/><stop offset="1" stop-color="#646567"/></linearGradient><radialGradient id="gFootL" gradientUnits="userSpaceOnUse" cx="718" cy="752" r="58"><stop offset="0" stop-color="#c0c1c3"/><stop offset="0.3" stop-color="#aeafb1"/><stop offset="0.7" stop-color="#929395"/><stop offset="1" stop-color="#6e6f71"/></radialGradient><radialGradient id="gFootR" gradientUnits="userSpaceOnUse" cx="820" cy="757" r="68"><stop offset="0" stop-color="#c2c3c5"/><stop offset="0.25" stop-color="#acadaf"/><stop offset="0.65" stop-color="#8e8f91"/><stop offset="1" stop-color="#646567"/></radialGradient><linearGradient id="gNose" gradientUnits="userSpaceOnUse" x1="0" y1="480.6" x2="0" y2="506.8"><stop offset="0" stop-color="#a6a7a9"/><stop offset="0.2" stop-color="#c4c5c7"/><stop offset="0.45" stop-color="#a0a1a3"/><stop offset="0.75" stop-color="#6e6f71"/><stop offset="1" stop-color="#545557"/></linearGradient><linearGradient id="gMouth" gradientUnits="userSpaceOnUse" x1="0" y1="506.8" x2="0" y2="525"><stop offset="0" stop-color="#828385"/><stop offset="0.35" stop-color="#b0b1b3"/><stop offset="0.65" stop-color="#969799"/><stop offset="1" stop-color="#646567"/></linearGradient><linearGradient id="gFlap" gradientUnits="userSpaceOnUse" x1="800" y1="655" x2="808" y2="700"><stop offset="0" stop-color="#848587"/><stop offset="0.25" stop-color="#a8a9ab"/><stop offset="0.7" stop-color="#a4a5a7"/><stop offset="1" stop-color="#7e7f81"/></linearGradient><linearGradient id="gPock" gradientUnits="userSpaceOnUse" x1="768" y1="700" x2="862" y2="716"><stop offset="0" stop-color="#969799"/><stop offset="0.4" stop-color="#aaabad"/><stop offset="0.8" stop-color="#9c9d9f"/><stop offset="1" stop-color="#808183"/></linearGradient><clipPath id="cHat"><path d="M596.3 445.9 C596.9 444.2 603.8 440.4 606.4 438.6 C609.0 436.8 609.5 436.9 612.2 435.2 C614.9 433.5 619.0 430.6 622.5 428.3 C626.0 426.0 629.4 423.9 633.0 421.5 C636.6 419.1 640.6 416.6 644.3 413.9 C648.0 411.2 651.8 408.4 655.0 405.4 C658.2 402.4 661.1 399.1 663.6 395.7 C666.1 392.3 667.9 388.6 670.0 385.0 C672.1 381.4 673.9 378.1 676.5 374.3 C679.1 370.5 681.8 366.2 685.4 362.0 C689.0 357.8 693.0 353.2 698.0 349.0 C703.0 344.8 709.0 340.3 715.1 336.7 C721.2 333.1 728.0 329.8 734.4 327.4 C740.8 325.0 747.3 323.7 753.7 322.6 C760.1 321.5 767.1 320.9 773.0 320.6 C778.9 320.3 783.1 320.3 789.0 320.9 C794.9 321.5 801.8 322.5 808.2 324.1 C814.6 325.7 821.1 327.7 827.5 330.4 C833.9 333.1 841.0 336.8 846.8 340.5 C852.6 344.2 858.0 348.6 862.3 352.5 C866.6 356.4 869.9 361.1 872.5 364.0 C875.1 366.9 875.6 366.9 877.9 370.0 C880.2 373.1 883.6 378.6 886.5 382.9 C889.4 387.2 892.1 391.9 895.0 395.7 C897.9 399.4 900.0 402.0 903.6 405.4 C907.2 408.8 912.6 413.1 916.5 416.1 C920.4 419.1 923.6 421.1 927.2 423.6 C930.8 426.1 934.3 428.6 937.9 431.1 C941.5 433.6 945.5 436.6 948.6 438.6 C951.7 440.7 954.5 442.2 956.5 443.4 C958.5 444.6 960.5 445.3 960.6 445.8 C960.7 446.3 958.4 446.2 957.2 446.3 C956.0 446.4 955.1 446.0 953.6 446.3 C952.1 446.6 950.0 447.5 948.2 448.4 C946.4 449.2 945.1 450.6 942.9 451.4 C940.7 452.2 937.5 452.8 934.8 453.0 C932.1 453.2 929.6 452.7 926.8 452.8 C924.0 452.9 921.0 453.3 918.0 453.4 C915.0 453.4 912.8 454.0 909.0 453.1 C905.2 452.2 900.9 450.1 895.0 448.2 C889.1 446.3 880.7 443.4 873.6 441.8 C866.5 440.2 858.3 438.8 852.2 438.3 C846.1 437.8 842.6 438.3 837.2 438.6 C831.8 438.9 826.2 439.5 820.0 440.2 C813.8 440.9 806.8 442.1 800.0 442.8 C793.2 443.6 786.0 444.3 779.3 444.7 C772.6 445.1 766.5 445.2 760.0 445.1 C753.5 445.0 746.8 444.7 740.0 444.0 C733.2 443.3 726.3 441.5 719.3 440.7 C712.3 439.9 704.1 439.4 697.9 439.1 C691.6 438.8 687.3 438.7 681.8 439.1 C676.3 439.5 670.4 440.2 665.0 441.6 C659.6 443.0 653.7 445.9 649.3 447.5 C644.9 449.1 641.7 450.2 638.6 451.3 C635.5 452.4 633.1 453.1 630.6 453.9 C628.1 454.7 625.8 455.8 623.6 456.1 C621.4 456.4 619.6 456.1 617.2 455.5 C614.8 454.9 611.5 453.4 609.1 452.3 C606.7 451.2 604.8 449.7 602.7 448.6 C600.6 447.5 595.7 447.6 596.3 445.9Z"/></clipPath><clipPath id="cFace"><path d="M643.2 446.0 C643.2 450.0 643.2 463.0 643.2 470.0 C643.2 477.0 643.0 480.1 643.4 487.9 C643.8 495.7 644.0 509.1 645.8 516.8 C647.6 524.5 650.4 529.1 654.2 534.2 C658.0 539.4 661.2 543.2 668.4 547.7 C675.6 552.2 686.0 558.0 697.2 561.2 C708.4 564.4 722.9 565.7 735.8 567.0 C748.7 568.3 761.5 568.7 774.4 568.9 C787.3 569.1 800.8 569.3 813.0 568.0 C825.2 566.7 836.9 564.3 847.5 561.2 C858.1 558.1 868.5 554.1 876.5 549.6 C884.5 545.1 890.3 540.3 895.8 534.2 C901.3 528.1 906.1 520.7 909.3 513.0 C912.5 505.3 914.0 495.1 915.1 487.9 C916.2 480.7 915.7 477.0 915.8 470.0 C915.9 463.0 915.8 450.0 915.8 446.0 L895 428 L665 428 Z"/></clipPath><clipPath id="cHead"><path d="M642.3 450.0 C638.5 457.0 642.2 462.5 642.2 470.0 C642.2 477.5 642.0 487.0 642.4 495.0 C642.8 503.0 643.1 510.8 644.6 518.0 C646.1 525.2 648.2 531.9 651.6 538.0 C655.0 544.1 657.8 549.2 665.0 554.5 C672.2 559.8 683.2 565.9 695.0 569.5 C706.8 573.1 721.8 574.7 736.0 576.0 C750.2 577.3 764.7 577.2 780.0 577.5 C795.3 577.8 815.2 578.4 828.0 577.6 C840.8 576.9 848.3 575.4 857.0 573.0 C865.7 570.6 872.5 568.2 880.3 563.4 C888.0 558.6 898.0 550.9 903.5 544.1 C909.0 537.3 911.1 530.8 913.4 522.6 C915.7 514.4 916.7 503.8 917.5 495.0 C918.3 486.2 918.1 477.5 918.2 470.0 C918.3 462.5 921.9 457.0 918.0 450.0 C914.1 443.0 918.0 432.7 895.0 428.0 C872.0 423.3 818.3 422.0 780.0 422.0 C741.7 422.0 688.0 423.3 665.0 428.0 C642.0 432.7 646.1 443.0 642.3 450.0Z"/></clipPath><clipPath id="cBody"><path d="M739.6 578.3 C734.3 582.9 732.6 587.5 728.1 593.8 C723.6 600.1 717.1 608.8 712.6 616.0 C708.1 623.2 704.0 629.8 701.0 637.2 C698.0 644.6 695.7 653.2 694.3 660.3 C692.9 667.4 692.2 673.2 692.4 679.6 C692.6 686.0 693.5 692.5 695.3 698.9 C697.1 705.3 699.8 712.4 703.0 718.2 C706.2 724.0 709.3 729.2 714.6 733.7 C719.9 738.2 726.9 742.2 735.0 745.0 C743.1 747.8 756.0 749.3 763.0 750.5 C770.0 751.7 772.3 752.4 777.0 752.4 C781.7 752.4 784.7 752.1 791.0 750.5 C797.3 748.9 807.2 746.6 815.0 743.0 C822.8 739.4 831.7 735.0 838.0 729.0 C844.3 723.0 849.2 714.8 853.0 707.0 C856.8 699.2 859.1 690.1 860.5 682.0 C861.9 673.9 862.3 665.2 861.3 658.4 C860.3 651.6 857.6 647.4 854.6 641.0 C851.6 634.6 847.5 627.2 843.0 619.8 C838.5 612.4 832.2 603.6 827.5 596.7 C822.8 589.8 820.4 583.4 815.0 578.3 C809.6 573.2 804.2 568.0 795.0 566.0 C785.8 564.0 769.2 564.0 760.0 566.0 C750.8 568.0 744.9 573.7 739.6 578.3Z"/></clipPath></defs>
<clipPath id="cb1"><path d="M733.8 575.9 C728.7 575.8 723.6 576.8 717.3 579.4 C711.0 582.0 702.7 586.9 696.0 591.2 C689.3 595.5 683.1 600.5 677.2 605.4 C671.3 610.3 665.4 615.6 660.7 620.7 C656.0 625.8 652.0 631.5 648.9 636.0 C645.8 640.5 643.2 644.8 641.8 647.8 C640.4 650.8 640.0 651.2 640.4 654.0 C640.8 656.8 641.6 661.6 644.2 664.3 C646.8 667.0 651.7 669.4 656.0 670.2 C660.3 671.0 664.9 670.6 670.0 669.0 C675.1 667.4 681.5 664.3 686.6 660.8 C691.7 657.3 695.9 653.3 700.8 647.8 C705.7 642.3 710.5 636.0 716.0 628.0 C721.5 620.0 728.7 608.0 734.0 600.0 C739.3 592.0 748.0 584.0 748.0 580.0 C748.0 576.0 738.9 576.0 733.8 575.9Z"/></clipPath><path d="M733.8 575.9 C728.7 575.8 723.6 576.8 717.3 579.4 C711.0 582.0 702.7 586.9 696.0 591.2 C689.3 595.5 683.1 600.5 677.2 605.4 C671.3 610.3 665.4 615.6 660.7 620.7 C656.0 625.8 652.0 631.5 648.9 636.0 C645.8 640.5 643.2 644.8 641.8 647.8 C640.4 650.8 640.0 651.2 640.4 654.0 C640.8 656.8 641.6 661.6 644.2 664.3 C646.8 667.0 651.7 669.4 656.0 670.2 C660.3 671.0 664.9 670.6 670.0 669.0 C675.1 667.4 681.5 664.3 686.6 660.8 C691.7 657.3 695.9 653.3 700.8 647.8 C705.7 642.3 710.5 636.0 716.0 628.0 C721.5 620.0 728.7 608.0 734.0 600.0 C739.3 592.0 748.0 584.0 748.0 580.0 C748.0 576.0 738.9 576.0 733.8 575.9Z" fill="url(#gArmL)"/><g clip-path="url(#cb1)"><path d="M733.8 575.9 C728.7 575.8 723.6 576.8 717.3 579.4 C711.0 582.0 702.7 586.9 696.0 591.2 C689.3 595.5 683.1 600.5 677.2 605.4 C671.3 610.3 665.4 615.6 660.7 620.7 C656.0 625.8 652.0 631.5 648.9 636.0 C645.8 640.5 643.2 644.8 641.8 647.8 C640.4 650.8 640.0 651.2 640.4 654.0 C640.8 656.8 641.6 661.6 644.2 664.3 C646.8 667.0 651.7 669.4 656.0 670.2 C660.3 671.0 664.9 670.6 670.0 669.0 C675.1 667.4 681.5 664.3 686.6 660.8 C691.7 657.3 695.9 653.3 700.8 647.8 C705.7 642.3 710.5 636.0 716.0 628.0 C721.5 620.0 728.7 608.0 734.0 600.0 C739.3 592.0 748.0 584.0 748.0 580.0 C748.0 576.0 738.9 576.0 733.8 575.9Z" fill="none" stroke="#505153" stroke-width="6" opacity="0.55" filter="url(#b2)"/></g><path d="M733.8 575.9 C728.7 575.8 723.6 576.8 717.3 579.4 C711.0 582.0 702.7 586.9 696.0 591.2 C689.3 595.5 683.1 600.5 677.2 605.4 C671.3 610.3 665.4 615.6 660.7 620.7 C656.0 625.8 652.0 631.5 648.9 636.0 C645.8 640.5 643.2 644.8 641.8 647.8 C640.4 650.8 640.0 651.2 640.4 654.0 C640.8 656.8 641.6 661.6 644.2 664.3 C646.8 667.0 651.7 669.4 656.0 670.2 C660.3 671.0 664.9 670.6 670.0 669.0 C675.1 667.4 681.5 664.3 686.6 660.8 C691.7 657.3 695.9 653.3 700.8 647.8 C705.7 642.3 710.5 636.0 716.0 628.0 C721.5 620.0 728.7 608.0 734.0 600.0 C739.3 592.0 748.0 584.0 748.0 580.0 C748.0 576.0 738.9 576.0 733.8 575.9Z" fill="none" stroke="#272728" stroke-width="1" stroke-opacity="0.8"/>
<clipPath id="cb2"><path d="M812.0 574.0 C810.9 576.3 821.3 585.7 826.0 592.0 C830.7 598.3 834.9 603.5 840.0 612.0 C845.1 620.5 851.7 635.6 856.4 643.1 C861.1 650.6 863.5 653.2 868.2 657.3 C872.9 661.4 879.2 665.5 884.7 667.9 C890.2 670.2 896.5 671.6 901.2 671.4 C905.9 671.2 910.2 669.1 913.0 666.7 C915.8 664.4 918.4 661.2 918.0 657.3 C917.6 653.4 914.2 648.2 910.6 643.1 C907.0 638.0 902.0 632.5 896.5 626.6 C891.0 620.7 884.7 614.0 877.6 607.7 C870.5 601.4 861.5 593.8 854.0 588.9 C846.5 584.0 839.8 580.8 832.8 578.3 C825.8 575.8 813.1 571.7 812.0 574.0Z"/></clipPath><path d="M812.0 574.0 C810.9 576.3 821.3 585.7 826.0 592.0 C830.7 598.3 834.9 603.5 840.0 612.0 C845.1 620.5 851.7 635.6 856.4 643.1 C861.1 650.6 863.5 653.2 868.2 657.3 C872.9 661.4 879.2 665.5 884.7 667.9 C890.2 670.2 896.5 671.6 901.2 671.4 C905.9 671.2 910.2 669.1 913.0 666.7 C915.8 664.4 918.4 661.2 918.0 657.3 C917.6 653.4 914.2 648.2 910.6 643.1 C907.0 638.0 902.0 632.5 896.5 626.6 C891.0 620.7 884.7 614.0 877.6 607.7 C870.5 601.4 861.5 593.8 854.0 588.9 C846.5 584.0 839.8 580.8 832.8 578.3 C825.8 575.8 813.1 571.7 812.0 574.0Z" fill="url(#gArmR)"/><g clip-path="url(#cb2)"><path d="M812.0 574.0 C810.9 576.3 821.3 585.7 826.0 592.0 C830.7 598.3 834.9 603.5 840.0 612.0 C845.1 620.5 851.7 635.6 856.4 643.1 C861.1 650.6 863.5 653.2 868.2 657.3 C872.9 661.4 879.2 665.5 884.7 667.9 C890.2 670.2 896.5 671.6 901.2 671.4 C905.9 671.2 910.2 669.1 913.0 666.7 C915.8 664.4 918.4 661.2 918.0 657.3 C917.6 653.4 914.2 648.2 910.6 643.1 C907.0 638.0 902.0 632.5 896.5 626.6 C891.0 620.7 884.7 614.0 877.6 607.7 C870.5 601.4 861.5 593.8 854.0 588.9 C846.5 584.0 839.8 580.8 832.8 578.3 C825.8 575.8 813.1 571.7 812.0 574.0Z" fill="none" stroke="#464749" stroke-width="6" opacity="0.5" filter="url(#b2)"/></g><path d="M812.0 574.0 C810.9 576.3 821.3 585.7 826.0 592.0 C830.7 598.3 834.9 603.5 840.0 612.0 C845.1 620.5 851.7 635.6 856.4 643.1 C861.1 650.6 863.5 653.2 868.2 657.3 C872.9 661.4 879.2 665.5 884.7 667.9 C890.2 670.2 896.5 671.6 901.2 671.4 C905.9 671.2 910.2 669.1 913.0 666.7 C915.8 664.4 918.4 661.2 918.0 657.3 C917.6 653.4 914.2 648.2 910.6 643.1 C907.0 638.0 902.0 632.5 896.5 626.6 C891.0 620.7 884.7 614.0 877.6 607.7 C870.5 601.4 861.5 593.8 854.0 588.9 C846.5 584.0 839.8 580.8 832.8 578.3 C825.8 575.8 813.1 571.7 812.0 574.0Z" fill="none" stroke="#272728" stroke-width="1" stroke-opacity="0.8"/>
<clipPath id="cb3"><path d="M739.6 578.3 C734.3 582.9 732.6 587.5 728.1 593.8 C723.6 600.1 717.1 608.8 712.6 616.0 C708.1 623.2 704.0 629.8 701.0 637.2 C698.0 644.6 695.7 653.2 694.3 660.3 C692.9 667.4 692.2 673.2 692.4 679.6 C692.6 686.0 693.5 692.5 695.3 698.9 C697.1 705.3 699.8 712.4 703.0 718.2 C706.2 724.0 709.3 729.2 714.6 733.7 C719.9 738.2 726.9 742.2 735.0 745.0 C743.1 747.8 756.0 749.3 763.0 750.5 C770.0 751.7 772.3 752.4 777.0 752.4 C781.7 752.4 784.7 752.1 791.0 750.5 C797.3 748.9 807.2 746.6 815.0 743.0 C822.8 739.4 831.7 735.0 838.0 729.0 C844.3 723.0 849.2 714.8 853.0 707.0 C856.8 699.2 859.1 690.1 860.5 682.0 C861.9 673.9 862.3 665.2 861.3 658.4 C860.3 651.6 857.6 647.4 854.6 641.0 C851.6 634.6 847.5 627.2 843.0 619.8 C838.5 612.4 832.2 603.6 827.5 596.7 C822.8 589.8 820.4 583.4 815.0 578.3 C809.6 573.2 804.2 568.0 795.0 566.0 C785.8 564.0 769.2 564.0 760.0 566.0 C750.8 568.0 744.9 573.7 739.6 578.3Z"/></clipPath><path d="M739.6 578.3 C734.3 582.9 732.6 587.5 728.1 593.8 C723.6 600.1 717.1 608.8 712.6 616.0 C708.1 623.2 704.0 629.8 701.0 637.2 C698.0 644.6 695.7 653.2 694.3 660.3 C692.9 667.4 692.2 673.2 692.4 679.6 C692.6 686.0 693.5 692.5 695.3 698.9 C697.1 705.3 699.8 712.4 703.0 718.2 C706.2 724.0 709.3 729.2 714.6 733.7 C719.9 738.2 726.9 742.2 735.0 745.0 C743.1 747.8 756.0 749.3 763.0 750.5 C770.0 751.7 772.3 752.4 777.0 752.4 C781.7 752.4 784.7 752.1 791.0 750.5 C797.3 748.9 807.2 746.6 815.0 743.0 C822.8 739.4 831.7 735.0 838.0 729.0 C844.3 723.0 849.2 714.8 853.0 707.0 C856.8 699.2 859.1 690.1 860.5 682.0 C861.9 673.9 862.3 665.2 861.3 658.4 C860.3 651.6 857.6 647.4 854.6 641.0 C851.6 634.6 847.5 627.2 843.0 619.8 C838.5 612.4 832.2 603.6 827.5 596.7 C822.8 589.8 820.4 583.4 815.0 578.3 C809.6 573.2 804.2 568.0 795.0 566.0 C785.8 564.0 769.2 564.0 760.0 566.0 C750.8 568.0 744.9 573.7 739.6 578.3Z" fill="url(#gBody)"/><g clip-path="url(#cb3)"><ellipse cx="852" cy="690" rx="20" ry="70" fill="#5a5b5d" opacity=".5" filter="url(#b9)"/><ellipse cx="777" cy="586" rx="55" ry="9" fill="#646567" opacity=".6" filter="url(#b6)"/><rect x="760" y="658" width="9" height="66" fill="#606163" opacity=".28" filter="url(#b2)"/><path d="M739.6 578.3 C734.3 582.9 732.6 587.5 728.1 593.8 C723.6 600.1 717.1 608.8 712.6 616.0 C708.1 623.2 704.0 629.8 701.0 637.2 C698.0 644.6 695.7 653.2 694.3 660.3 C692.9 667.4 692.2 673.2 692.4 679.6 C692.6 686.0 693.5 692.5 695.3 698.9 C697.1 705.3 699.8 712.4 703.0 718.2 C706.2 724.0 709.3 729.2 714.6 733.7 C719.9 738.2 726.9 742.2 735.0 745.0 C743.1 747.8 756.0 749.3 763.0 750.5 C770.0 751.7 772.3 752.4 777.0 752.4 C781.7 752.4 784.7 752.1 791.0 750.5 C797.3 748.9 807.2 746.6 815.0 743.0 C822.8 739.4 831.7 735.0 838.0 729.0 C844.3 723.0 849.2 714.8 853.0 707.0 C856.8 699.2 859.1 690.1 860.5 682.0 C861.9 673.9 862.3 665.2 861.3 658.4 C860.3 651.6 857.6 647.4 854.6 641.0 C851.6 634.6 847.5 627.2 843.0 619.8 C838.5 612.4 832.2 603.6 827.5 596.7 C822.8 589.8 820.4 583.4 815.0 578.3 C809.6 573.2 804.2 568.0 795.0 566.0 C785.8 564.0 769.2 564.0 760.0 566.0 C750.8 568.0 744.9 573.7 739.6 578.3Z" fill="none" stroke="#505153" stroke-width="7" opacity="0.5" filter="url(#b2)"/></g><path d="M739.6 578.3 C734.3 582.9 732.6 587.5 728.1 593.8 C723.6 600.1 717.1 608.8 712.6 616.0 C708.1 623.2 704.0 629.8 701.0 637.2 C698.0 644.6 695.7 653.2 694.3 660.3 C692.9 667.4 692.2 673.2 692.4 679.6 C692.6 686.0 693.5 692.5 695.3 698.9 C697.1 705.3 699.8 712.4 703.0 718.2 C706.2 724.0 709.3 729.2 714.6 733.7 C719.9 738.2 726.9 742.2 735.0 745.0 C743.1 747.8 756.0 749.3 763.0 750.5 C770.0 751.7 772.3 752.4 777.0 752.4 C781.7 752.4 784.7 752.1 791.0 750.5 C797.3 748.9 807.2 746.6 815.0 743.0 C822.8 739.4 831.7 735.0 838.0 729.0 C844.3 723.0 849.2 714.8 853.0 707.0 C856.8 699.2 859.1 690.1 860.5 682.0 C861.9 673.9 862.3 665.2 861.3 658.4 C860.3 651.6 857.6 647.4 854.6 641.0 C851.6 634.6 847.5 627.2 843.0 619.8 C838.5 612.4 832.2 603.6 827.5 596.7 C822.8 589.8 820.4 583.4 815.0 578.3 C809.6 573.2 804.2 568.0 795.0 566.0 C785.8 564.0 769.2 564.0 760.0 566.0 C750.8 568.0 744.9 573.7 739.6 578.3Z" fill="none" stroke="#272728" stroke-width="1" stroke-opacity="0.8"/>
<clipPath id="cb4"><path d="M665.5 758.5 C664.9 754.4 666.4 750.9 668.0 748.0 C669.6 745.1 671.0 743.4 675.1 740.9 C679.2 738.4 686.2 734.6 692.7 733.0 C699.2 731.4 707.4 730.8 713.8 731.3 C720.2 731.8 725.4 733.5 731.3 735.7 C737.1 737.9 743.0 741.6 748.9 744.5 C754.8 747.4 764.1 750.6 766.5 753.2 C768.9 755.8 766.5 757.4 763.0 760.3 C759.5 763.2 751.9 767.3 745.4 770.8 C738.9 774.3 730.8 779.1 724.3 781.3 C717.8 783.5 713.1 784.0 706.7 784.0 C700.3 784.0 691.6 783.2 685.7 781.3 C679.9 779.4 675.0 776.4 671.6 772.6 C668.2 768.8 666.1 762.6 665.5 758.5Z"/></clipPath><path d="M665.5 758.5 C664.9 754.4 666.4 750.9 668.0 748.0 C669.6 745.1 671.0 743.4 675.1 740.9 C679.2 738.4 686.2 734.6 692.7 733.0 C699.2 731.4 707.4 730.8 713.8 731.3 C720.2 731.8 725.4 733.5 731.3 735.7 C737.1 737.9 743.0 741.6 748.9 744.5 C754.8 747.4 764.1 750.6 766.5 753.2 C768.9 755.8 766.5 757.4 763.0 760.3 C759.5 763.2 751.9 767.3 745.4 770.8 C738.9 774.3 730.8 779.1 724.3 781.3 C717.8 783.5 713.1 784.0 706.7 784.0 C700.3 784.0 691.6 783.2 685.7 781.3 C679.9 779.4 675.0 776.4 671.6 772.6 C668.2 768.8 666.1 762.6 665.5 758.5Z" fill="url(#gFootL)"/><g clip-path="url(#cb4)"><path d="M665.5 758.5 C664.9 754.4 666.4 750.9 668.0 748.0 C669.6 745.1 671.0 743.4 675.1 740.9 C679.2 738.4 686.2 734.6 692.7 733.0 C699.2 731.4 707.4 730.8 713.8 731.3 C720.2 731.8 725.4 733.5 731.3 735.7 C737.1 737.9 743.0 741.6 748.9 744.5 C754.8 747.4 764.1 750.6 766.5 753.2 C768.9 755.8 766.5 757.4 763.0 760.3 C759.5 763.2 751.9 767.3 745.4 770.8 C738.9 774.3 730.8 779.1 724.3 781.3 C717.8 783.5 713.1 784.0 706.7 784.0 C700.3 784.0 691.6 783.2 685.7 781.3 C679.9 779.4 675.0 776.4 671.6 772.6 C668.2 768.8 666.1 762.6 665.5 758.5Z" fill="none" stroke="#4e4f51" stroke-width="6" opacity="0.5" filter="url(#b2)"/></g><path d="M665.5 758.5 C664.9 754.4 666.4 750.9 668.0 748.0 C669.6 745.1 671.0 743.4 675.1 740.9 C679.2 738.4 686.2 734.6 692.7 733.0 C699.2 731.4 707.4 730.8 713.8 731.3 C720.2 731.8 725.4 733.5 731.3 735.7 C737.1 737.9 743.0 741.6 748.9 744.5 C754.8 747.4 764.1 750.6 766.5 753.2 C768.9 755.8 766.5 757.4 763.0 760.3 C759.5 763.2 751.9 767.3 745.4 770.8 C738.9 774.3 730.8 779.1 724.3 781.3 C717.8 783.5 713.1 784.0 706.7 784.0 C700.3 784.0 691.6 783.2 685.7 781.3 C679.9 779.4 675.0 776.4 671.6 772.6 C668.2 768.8 666.1 762.6 665.5 758.5Z" fill="none" stroke="#272728" stroke-width="1" stroke-opacity="0.8"/>
<clipPath id="cb5"><path d="M784.9 754.1 C786.7 751.8 793.0 747.4 798.1 744.5 C803.2 741.6 809.9 738.4 815.7 736.5 C821.6 734.6 827.4 733.4 833.2 733.0 C839.1 732.6 844.9 732.9 850.8 733.9 C856.6 734.9 863.3 737.2 868.3 739.2 C873.3 741.2 877.7 743.3 880.6 746.2 C883.5 749.1 885.5 752.9 885.9 756.7 C886.3 760.5 885.3 765.5 883.3 769.0 C881.2 772.5 878.1 775.4 873.6 777.8 C869.1 780.1 862.1 782.1 856.0 783.1 C849.9 784.1 843.4 784.9 836.7 784.0 C830.0 783.1 822.1 780.6 815.7 777.8 C809.3 775.0 802.8 770.5 798.1 767.3 C793.4 764.1 789.7 760.7 787.5 758.5 C785.3 756.3 783.1 756.4 784.9 754.1Z"/></clipPath><path d="M784.9 754.1 C786.7 751.8 793.0 747.4 798.1 744.5 C803.2 741.6 809.9 738.4 815.7 736.5 C821.6 734.6 827.4 733.4 833.2 733.0 C839.1 732.6 844.9 732.9 850.8 733.9 C856.6 734.9 863.3 737.2 868.3 739.2 C873.3 741.2 877.7 743.3 880.6 746.2 C883.5 749.1 885.5 752.9 885.9 756.7 C886.3 760.5 885.3 765.5 883.3 769.0 C881.2 772.5 878.1 775.4 873.6 777.8 C869.1 780.1 862.1 782.1 856.0 783.1 C849.9 784.1 843.4 784.9 836.7 784.0 C830.0 783.1 822.1 780.6 815.7 777.8 C809.3 775.0 802.8 770.5 798.1 767.3 C793.4 764.1 789.7 760.7 787.5 758.5 C785.3 756.3 783.1 756.4 784.9 754.1Z" fill="url(#gFootR)"/><g clip-path="url(#cb5)"><path d="M784.9 754.1 C786.7 751.8 793.0 747.4 798.1 744.5 C803.2 741.6 809.9 738.4 815.7 736.5 C821.6 734.6 827.4 733.4 833.2 733.0 C839.1 732.6 844.9 732.9 850.8 733.9 C856.6 734.9 863.3 737.2 868.3 739.2 C873.3 741.2 877.7 743.3 880.6 746.2 C883.5 749.1 885.5 752.9 885.9 756.7 C886.3 760.5 885.3 765.5 883.3 769.0 C881.2 772.5 878.1 775.4 873.6 777.8 C869.1 780.1 862.1 782.1 856.0 783.1 C849.9 784.1 843.4 784.9 836.7 784.0 C830.0 783.1 822.1 780.6 815.7 777.8 C809.3 775.0 802.8 770.5 798.1 767.3 C793.4 764.1 789.7 760.7 787.5 758.5 C785.3 756.3 783.1 756.4 784.9 754.1Z" fill="none" stroke="#48494b" stroke-width="6" opacity="0.5" filter="url(#b2)"/></g><path d="M784.9 754.1 C786.7 751.8 793.0 747.4 798.1 744.5 C803.2 741.6 809.9 738.4 815.7 736.5 C821.6 734.6 827.4 733.4 833.2 733.0 C839.1 732.6 844.9 732.9 850.8 733.9 C856.6 734.9 863.3 737.2 868.3 739.2 C873.3 741.2 877.7 743.3 880.6 746.2 C883.5 749.1 885.5 752.9 885.9 756.7 C886.3 760.5 885.3 765.5 883.3 769.0 C881.2 772.5 878.1 775.4 873.6 777.8 C869.1 780.1 862.1 782.1 856.0 783.1 C849.9 784.1 843.4 784.9 836.7 784.0 C830.0 783.1 822.1 780.6 815.7 777.8 C809.3 775.0 802.8 770.5 798.1 767.3 C793.4 764.1 789.7 760.7 787.5 758.5 C785.3 756.3 783.1 756.4 784.9 754.1Z" fill="none" stroke="#272728" stroke-width="1" stroke-opacity="0.8"/>
<clipPath id="cb6"><path d="M768 668 L767.8 712 Q768 722 775 727 Q783 731.5 798 733 L833 734.2 Q850 734.5 855.5 727 Q858.5 720 859.5 700 L862 668 Z"/></clipPath><path d="M768 668 L767.8 712 Q768 722 775 727 Q783 731.5 798 733 L833 734.2 Q850 734.5 855.5 727 Q858.5 720 859.5 700 L862 668 Z" fill="url(#gPock)"/><g clip-path="url(#cb6)"><path d="M768 690 L800 695 L850 701 L862 696 L862 706 L850 709 L800 702 L768 698Z" fill="#545557" opacity=".5" filter="url(#b2)"/><path d="M768 668 L767.8 712 Q768 722 775 727 Q783 731.5 798 733 L833 734.2 Q850 734.5 855.5 727 Q858.5 720 859.5 700 L862 668 Z" fill="none" stroke="#5a5b5d" stroke-width="4" opacity="0.45" filter="url(#b2)"/></g><path d="M768 668 L767.8 712 Q768 722 775 727 Q783 731.5 798 733 L833 734.2 Q850 734.5 855.5 727 Q858.5 720 859.5 700 L862 668 Z" fill="none" stroke="#272728" stroke-width="1" stroke-opacity="0.8"/>
<clipPath id="cb7"><path d="M776 655.3 Q770.5 656.5 769.5 664 Q768.6 676 771.5 684.5 Q774 692 782 693.3 L820 697.6 L846 700.3 Q856 701 859.5 694.5 Q863 684 864.3 670 Q864.6 667 861 666.5 L800 658 Z"/></clipPath><path d="M776 655.3 Q770.5 656.5 769.5 664 Q768.6 676 771.5 684.5 Q774 692 782 693.3 L820 697.6 L846 700.3 Q856 701 859.5 694.5 Q863 684 864.3 670 Q864.6 667 861 666.5 L800 658 Z" fill="url(#gFlap)"/><g clip-path="url(#cb7)"><path d="M772 660 L800 661.5 L862 670" fill="none" stroke="#c4c5c7" stroke-width="3" opacity=".55" filter="url(#b1)"/><rect x="850" y="664" width="16" height="38" fill="#505153" opacity=".35" filter="url(#b3)"/><path d="M776 655.3 Q770.5 656.5 769.5 664 Q768.6 676 771.5 684.5 Q774 692 782 693.3 L820 697.6 L846 700.3 Q856 701 859.5 694.5 Q863 684 864.3 670 Q864.6 667 861 666.5 L800 658 Z" fill="none" stroke="#5a5b5d" stroke-width="3.5" opacity="0.4" filter="url(#b2)"/></g><path d="M776 655.3 Q770.5 656.5 769.5 664 Q768.6 676 771.5 684.5 Q774 692 782 693.3 L820 697.6 L846 700.3 Q856 701 859.5 694.5 Q863 684 864.3 670 Q864.6 667 861 666.5 L800 658 Z" fill="none" stroke="#272728" stroke-width="1" stroke-opacity="0.8"/>
<path d="M642.3 450.0 C638.5 457.0 642.2 462.5 642.2 470.0 C642.2 477.5 642.0 487.0 642.4 495.0 C642.8 503.0 643.1 510.8 644.6 518.0 C646.1 525.2 648.2 531.9 651.6 538.0 C655.0 544.1 657.8 549.2 665.0 554.5 C672.2 559.8 683.2 565.9 695.0 569.5 C706.8 573.1 721.8 574.7 736.0 576.0 C750.2 577.3 764.7 577.2 780.0 577.5 C795.3 577.8 815.2 578.4 828.0 577.6 C840.8 576.9 848.3 575.4 857.0 573.0 C865.7 570.6 872.5 568.2 880.3 563.4 C888.0 558.6 898.0 550.9 903.5 544.1 C909.0 537.3 911.1 530.8 913.4 522.6 C915.7 514.4 916.7 503.8 917.5 495.0 C918.3 486.2 918.1 477.5 918.2 470.0 C918.3 462.5 921.9 457.0 918.0 450.0 C914.1 443.0 918.0 432.7 895.0 428.0 C872.0 423.3 818.3 422.0 780.0 422.0 C741.7 422.0 688.0 423.3 665.0 428.0 C642.0 432.7 646.1 443.0 642.3 450.0Z" fill="#5c5d5f" stroke="#272728" stroke-width="1" stroke-opacity=".85"/>
<g clip-path="url(#cHead)"><path d="M643.2 446.0 C643.2 450.0 643.2 463.0 643.2 470.0 C643.2 477.0 643.0 480.1 643.4 487.9 C643.8 495.7 644.0 509.1 645.8 516.8 C647.6 524.5 650.4 529.1 654.2 534.2 C658.0 539.4 661.2 543.2 668.4 547.7 C675.6 552.2 686.0 558.0 697.2 561.2 C708.4 564.4 722.9 565.7 735.8 567.0 C748.7 568.3 761.5 568.7 774.4 568.9 C787.3 569.1 800.8 569.3 813.0 568.0 C825.2 566.7 836.9 564.3 847.5 561.2 C858.1 558.1 868.5 554.1 876.5 549.6 C884.5 545.1 890.3 540.3 895.8 534.2 C901.3 528.1 906.1 520.7 909.3 513.0 C912.5 505.3 914.0 495.1 915.1 487.9 C916.2 480.7 915.7 477.0 915.8 470.0 C915.9 463.0 915.8 450.0 915.8 446.0" fill="none" stroke="#7a7b7d" stroke-width="7" opacity=".9" filter="url(#b2)" transform="translate(0,3.5)"/></g>
<path d="M643.2 446.0 C643.2 450.0 643.2 463.0 643.2 470.0 C643.2 477.0 643.0 480.1 643.4 487.9 C643.8 495.7 644.0 509.1 645.8 516.8 C647.6 524.5 650.4 529.1 654.2 534.2 C658.0 539.4 661.2 543.2 668.4 547.7 C675.6 552.2 686.0 558.0 697.2 561.2 C708.4 564.4 722.9 565.7 735.8 567.0 C748.7 568.3 761.5 568.7 774.4 568.9 C787.3 569.1 800.8 569.3 813.0 568.0 C825.2 566.7 836.9 564.3 847.5 561.2 C858.1 558.1 868.5 554.1 876.5 549.6 C884.5 545.1 890.3 540.3 895.8 534.2 C901.3 528.1 906.1 520.7 909.3 513.0 C912.5 505.3 914.0 495.1 915.1 487.9 C916.2 480.7 915.7 477.0 915.8 470.0 C915.9 463.0 915.8 450.0 915.8 446.0 L895 428 L665 428 Z" fill="url(#gFaceV)"/>
<path d="M643.2 446.0 C643.2 450.0 643.2 463.0 643.2 470.0 C643.2 477.0 643.0 480.1 643.4 487.9 C643.8 495.7 644.0 509.1 645.8 516.8 C647.6 524.5 650.4 529.1 654.2 534.2 C658.0 539.4 661.2 543.2 668.4 547.7 C675.6 552.2 686.0 558.0 697.2 561.2 C708.4 564.4 722.9 565.7 735.8 567.0 C748.7 568.3 761.5 568.7 774.4 568.9 C787.3 569.1 800.8 569.3 813.0 568.0 C825.2 566.7 836.9 564.3 847.5 561.2 C858.1 558.1 868.5 554.1 876.5 549.6 C884.5 545.1 890.3 540.3 895.8 534.2 C901.3 528.1 906.1 520.7 909.3 513.0 C912.5 505.3 914.0 495.1 915.1 487.9 C916.2 480.7 915.7 477.0 915.8 470.0 C915.9 463.0 915.8 450.0 915.8 446.0 L895 428 L665 428 Z" fill="url(#gFaceH)"/>
<g clip-path="url(#cFace)"><path d="M912 446 L912 500 Q906 528 880 548 L846 562 L900 575 L930 500 L930 446Z" fill="#464749" opacity=".35" filter="url(#b6)"/></g>
<path d="M643.2 446.0 C643.2 450.0 643.2 463.0 643.2 470.0 C643.2 477.0 643.0 480.1 643.4 487.9 C643.8 495.7 645.4 512.0 645.8 516.8" fill="none" stroke="#55565a" stroke-width="1.4" opacity=".7" transform="translate(2.4,0)"/>
<path d="M909.3 513.0 C910.3 508.8 914.0 495.1 915.1 487.9 C916.2 480.7 915.7 477.0 915.8 470.0 C915.9 463.0 915.8 450.0 915.8 446.0" fill="none" stroke="#48494c" stroke-width="1.5" opacity=".7" transform="translate(-2.6,0)"/>
<path d="M643.2 446.0 C643.2 450.0 643.2 463.0 643.2 470.0 C643.2 477.0 643.0 480.1 643.4 487.9 C643.8 495.7 644.0 509.1 645.8 516.8 C647.6 524.5 650.4 529.1 654.2 534.2 C658.0 539.4 661.2 543.2 668.4 547.7 C675.6 552.2 686.0 558.0 697.2 561.2 C708.4 564.4 722.9 565.7 735.8 567.0 C748.7 568.3 761.5 568.7 774.4 568.9 C787.3 569.1 800.8 569.3 813.0 568.0 C825.2 566.7 836.9 564.3 847.5 561.2 C858.1 558.1 868.5 554.1 876.5 549.6 C884.5 545.1 890.3 540.3 895.8 534.2 C901.3 528.1 906.1 520.7 909.3 513.0 C912.5 505.3 914.0 495.1 915.1 487.9 C916.2 480.7 915.7 477.0 915.8 470.0 C915.9 463.0 915.8 450.0 915.8 446.0" fill="none" stroke="#5a5b5e" stroke-width="2.6" opacity=".7"/>
<path d="M643.2 446.0 C643.2 450.0 643.2 463.0 643.2 470.0 C643.2 477.0 643.0 480.1 643.4 487.9 C643.8 495.7 644.0 509.1 645.8 516.8 C647.6 524.5 650.4 529.1 654.2 534.2 C658.0 539.4 661.2 543.2 668.4 547.7 C675.6 552.2 686.0 558.0 697.2 561.2 C708.4 564.4 722.9 565.7 735.8 567.0 C748.7 568.3 761.5 568.7 774.4 568.9 C787.3 569.1 800.8 569.3 813.0 568.0 C825.2 566.7 836.9 564.3 847.5 561.2 C858.1 558.1 868.5 554.1 876.5 549.6 C884.5 545.1 890.3 540.3 895.8 534.2 C901.3 528.1 906.1 520.7 909.3 513.0 C912.5 505.3 914.0 495.1 915.1 487.9 C916.2 480.7 915.7 477.0 915.8 470.0 C915.9 463.0 915.8 450.0 915.8 446.0" fill="none" stroke="#d0d1d3" stroke-width="1.6"/>
<radialGradient id="gb677" gradientUnits="userSpaceOnUse" cx="677.9" cy="497.5" r="24.072000000000003" fx="670.5079999999999" fy="488.06" gradientTransform="translate(677.9 497.5) scale(0.746 1.000) translate(-677.9 -497.5)"><stop offset="0" stop-color="#c4c5c7"/><stop offset="0.35" stop-color="#b0b1b3"/><stop offset="0.75" stop-color="#929395"/><stop offset="1" stop-color="#78797b"/></radialGradient><ellipse cx="677.9" cy="497.5" rx="19.1" ry="25.1" fill="none" stroke="#c4c5c7" stroke-width="2" opacity=".3" transform="rotate(-3 677.9 497.5)"/><ellipse cx="677.9" cy="497.5" rx="17.6" ry="23.6" fill="url(#gb677)" stroke="#636467" stroke-width=".9" transform="rotate(-3 677.9 497.5)"/>
<radialGradient id="gb871" gradientUnits="userSpaceOnUse" cx="871.3" cy="497.5" r="24.276" fx="863.4879999999999" fy="487.98" gradientTransform="translate(871.3 497.5) scale(0.782 1.000) translate(-871.3 -497.5)"><stop offset="0" stop-color="#b6b7b9"/><stop offset="0.35" stop-color="#969799"/><stop offset="0.75" stop-color="#626365"/><stop offset="1" stop-color="#4e4f51"/></radialGradient><ellipse cx="871.3" cy="497.5" rx="20.1" ry="25.3" fill="none" stroke="#c4c5c7" stroke-width="2" opacity=".3" transform="rotate(5 871.3 497.5)"/><ellipse cx="871.3" cy="497.5" rx="18.6" ry="23.8" fill="url(#gb871)" stroke="#636467" stroke-width=".9" transform="rotate(5 871.3 497.5)"/>
<radialGradient id="gb726" gradientUnits="userSpaceOnUse" cx="726.7" cy="472.8" r="15.096000000000002" fx="720.484" fy="466.88" gradientTransform="translate(726.7 472.8) scale(1.000 1.000) translate(-726.7 -472.8)"><stop offset="0" stop-color="#bebfc1"/><stop offset="0.35" stop-color="#aeafb1"/><stop offset="0.75" stop-color="#969799"/><stop offset="1" stop-color="#828385"/></radialGradient><ellipse cx="726.7" cy="472.8" rx="16.3" ry="16.3" fill="none" stroke="#c4c5c7" stroke-width="2" opacity=".3" transform="rotate(0 726.7 472.8)"/><ellipse cx="726.7" cy="472.8" rx="14.8" ry="14.8" fill="url(#gb726)" stroke="#636467" stroke-width=".9" transform="rotate(0 726.7 472.8)"/>
<radialGradient id="gb819" gradientUnits="userSpaceOnUse" cx="819.1" cy="472.8" r="15.198" fx="812.842" fy="466.84000000000003" gradientTransform="translate(819.1 472.8) scale(1.000 1.000) translate(-819.1 -472.8)"><stop offset="0" stop-color="#babbbd"/><stop offset="0.35" stop-color="#a2a3a5"/><stop offset="0.75" stop-color="#7a7b7d"/><stop offset="1" stop-color="#646567"/></radialGradient><ellipse cx="819.1" cy="472.8" rx="16.4" ry="16.4" fill="none" stroke="#c4c5c7" stroke-width="2" opacity=".3" transform="rotate(0 819.1 472.8)"/><ellipse cx="819.1" cy="472.8" rx="14.9" ry="14.9" fill="url(#gb819)" stroke="#636467" stroke-width=".9" transform="rotate(0 819.1 472.8)"/>
<circle cx="726.7" cy="472.9" r="2.7" fill="#f5991f" stroke="#3a2a10" stroke-width=".9"/>
<ellipse cx="771.5" cy="493.7" rx="19.9" ry="13.1" fill="url(#gNose)" stroke="#38383a" stroke-width="1" stroke-opacity=".55"/>
<ellipse cx="772.4" cy="515.9" rx="18.7" ry="9.1" fill="url(#gMouth)" stroke="#38383a" stroke-width="1" stroke-opacity=".55"/>
<ellipse cx="766" cy="487" rx="9" ry="4" fill="#cdced0" opacity=".5" filter="url(#b2)"/>
<path d="M596.3 445.9 L595.7 450 L598.4 455 L602.7 456.6 L608 456.1 L611.8 454.2 L609.1 452.3 L602.7 448.6Z" fill="#45413d" stroke="#262626" stroke-width=".8"/>
<path d="M630 454 L641.4 458.6 L641.9 449.6Z" fill="#47433f"/>
<path d="M644.6 449 L649.4 447.6 L649.2 462 L646.8 486 L645 486Z" fill="#47474a" opacity=".8"/>
<path d="M953.6 446 L960.6 445.7 L962.4 449 L961.6 453.2 L959.5 455.7 L953.6 453.8 L948.2 452.2 L942.9 452.8 L932.2 457 L918.8 462.3 L918.2 455.2 L926.8 452.6 L934.8 452.9 L942.9 451.2 L948.2 448.2Z" fill="#46423e" stroke="#262626" stroke-width=".8"/>
<path d="M914.4 453.6 L909.4 452.8 L909.8 466 L911.6 486 L913.6 486Z" fill="#454548" opacity=".8"/>
<path d="M596.3 445.9 C596.9 444.2 603.8 440.4 606.4 438.6 C609.0 436.8 609.5 436.9 612.2 435.2 C614.9 433.5 619.0 430.6 622.5 428.3 C626.0 426.0 629.4 423.9 633.0 421.5 C636.6 419.1 640.6 416.6 644.3 413.9 C648.0 411.2 651.8 408.4 655.0 405.4 C658.2 402.4 661.1 399.1 663.6 395.7 C666.1 392.3 667.9 388.6 670.0 385.0 C672.1 381.4 673.9 378.1 676.5 374.3 C679.1 370.5 681.8 366.2 685.4 362.0 C689.0 357.8 693.0 353.2 698.0 349.0 C703.0 344.8 709.0 340.3 715.1 336.7 C721.2 333.1 728.0 329.8 734.4 327.4 C740.8 325.0 747.3 323.7 753.7 322.6 C760.1 321.5 767.1 320.9 773.0 320.6 C778.9 320.3 783.1 320.3 789.0 320.9 C794.9 321.5 801.8 322.5 808.2 324.1 C814.6 325.7 821.1 327.7 827.5 330.4 C833.9 333.1 841.0 336.8 846.8 340.5 C852.6 344.2 858.0 348.6 862.3 352.5 C866.6 356.4 869.9 361.1 872.5 364.0 C875.1 366.9 875.6 366.9 877.9 370.0 C880.2 373.1 883.6 378.6 886.5 382.9 C889.4 387.2 892.1 391.9 895.0 395.7 C897.9 399.4 900.0 402.0 903.6 405.4 C907.2 408.8 912.6 413.1 916.5 416.1 C920.4 419.1 923.6 421.1 927.2 423.6 C930.8 426.1 934.3 428.6 937.9 431.1 C941.5 433.6 945.5 436.6 948.6 438.6 C951.7 440.7 954.5 442.2 956.5 443.4 C958.5 444.6 960.5 445.3 960.6 445.8 C960.7 446.3 958.4 446.2 957.2 446.3 C956.0 446.4 955.1 446.0 953.6 446.3 C952.1 446.6 950.0 447.5 948.2 448.4 C946.4 449.2 945.1 450.6 942.9 451.4 C940.7 452.2 937.5 452.8 934.8 453.0 C932.1 453.2 929.6 452.7 926.8 452.8 C924.0 452.9 921.0 453.3 918.0 453.4 C915.0 453.4 912.8 454.0 909.0 453.1 C905.2 452.2 900.9 450.1 895.0 448.2 C889.1 446.3 880.7 443.4 873.6 441.8 C866.5 440.2 858.3 438.8 852.2 438.3 C846.1 437.8 842.6 438.3 837.2 438.6 C831.8 438.9 826.2 439.5 820.0 440.2 C813.8 440.9 806.8 442.1 800.0 442.8 C793.2 443.6 786.0 444.3 779.3 444.7 C772.6 445.1 766.5 445.2 760.0 445.1 C753.5 445.0 746.8 444.7 740.0 444.0 C733.2 443.3 726.3 441.5 719.3 440.7 C712.3 439.9 704.1 439.4 697.9 439.1 C691.6 438.8 687.3 438.7 681.8 439.1 C676.3 439.5 670.4 440.2 665.0 441.6 C659.6 443.0 653.7 445.9 649.3 447.5 C644.9 449.1 641.7 450.2 638.6 451.3 C635.5 452.4 633.1 453.1 630.6 453.9 C628.1 454.7 625.8 455.8 623.6 456.1 C621.4 456.4 619.6 456.1 617.2 455.5 C614.8 454.9 611.5 453.4 609.1 452.3 C606.7 451.2 604.8 449.7 602.7 448.6 C600.6 447.5 595.7 447.6 596.3 445.9Z" fill="url(#gHat)" stroke="#272728" stroke-width="1" stroke-opacity=".85"/>
<g clip-path="url(#cHat)">
<rect x="590" y="315" width="380" height="150" fill="url(#gHatR)"/>
<path d="M648.0 411.0 C650.7 412.7 657.0 418.1 664.0 421.0 C671.0 423.9 679.0 426.7 690.0 428.5 C701.0 430.3 716.7 431.2 730.0 432.0 C743.3 432.8 756.3 433.6 770.0 433.5 C783.7 433.4 799.3 432.7 812.0 431.5 C824.7 430.3 835.7 428.9 846.0 426.5 C856.3 424.1 866.2 421.1 874.0 417.0 C881.8 412.9 889.8 404.5 893.0 402.0" fill="none" stroke="#606163" stroke-width="15" opacity=".33" filter="url(#b6)"/>
<path d="M846 424 Q876 418 894 402 L922 424 L905 447 L868 436Z" fill="#58595b" opacity=".38" filter="url(#b4)"/>
<path d="M596.3 445.9 C598.0 444.7 603.8 440.4 606.4 438.6 C609.0 436.8 609.5 436.9 612.2 435.2 C614.9 433.5 619.0 430.6 622.5 428.3 C626.0 426.0 629.4 423.9 633.0 421.5 C636.6 419.1 640.6 416.6 644.3 413.9 C648.0 411.2 653.2 406.8 655.0 405.4" fill="none" stroke="#babbbd" stroke-width="7" opacity=".5" filter="url(#b3)" transform="translate(4,5)"/>
<path d="M895.0 395.7 C896.4 397.3 900.0 402.0 903.6 405.4 C907.2 408.8 912.6 413.1 916.5 416.1 C920.4 419.1 923.6 421.1 927.2 423.6 C930.8 426.1 934.3 428.6 937.9 431.1 C941.5 433.6 945.5 436.6 948.6 438.6 C951.7 440.7 954.5 442.2 956.5 443.4 C958.5 444.6 959.9 445.4 960.6 445.8" fill="none" stroke="#b6b7b9" stroke-width="7" opacity=".7" filter="url(#b3)" transform="translate(-5,5)"/>
<path d="M895.0 448.2 C891.4 447.1 880.7 443.4 873.6 441.8 C866.5 440.2 858.3 438.8 852.2 438.3 C846.1 437.8 842.6 438.3 837.2 438.6 C831.8 438.9 826.2 439.5 820.0 440.2 C813.8 440.9 806.8 442.1 800.0 442.8 C793.2 443.6 786.0 444.3 779.3 444.7 C772.6 445.1 766.5 445.2 760.0 445.1 C753.5 445.0 746.8 444.7 740.0 444.0 C733.2 443.3 726.3 441.5 719.3 440.7 C712.3 439.9 704.1 439.4 697.9 439.1 C691.6 438.8 687.3 438.7 681.8 439.1 C676.3 439.5 670.4 440.2 665.0 441.6 C659.6 443.0 651.9 446.5 649.3 447.5" fill="none" stroke="#bebfc1" stroke-width="5" opacity=".3" filter="url(#b3)" transform="translate(0,-5)"/>
</g>
</svg><div class="a" style="left:0;top:0;width:1584px;height:63.5px;background:#343434"></div><svg style="left:-1px;top:-29px" width="1594" height="933"><line x1="1058.9" y1="61" x2="1059.1" y2="92.5" stroke="#2c2c2c" stroke-width="1" opacity=".55"/></svg></div><div class="a" style="left:1588.0px;top:30.0px;width:12.0px;height:300.0px;background:#282828;border-radius:6px"></div>
<div class="a" style="left:1588.0px;top:333.6px;width:12.0px;height:597.4px;background:#1d1d1d;border-radius:6px"></div>
<div class="a" style="left:1588.0px;top:333.6px;width:12.0px;height:30.4px;background:#2e2e2e;border-radius:6px 0 0 0"></div>
<div class="a" style="left:1590.5px;top:682.0px;width:9.5px;height:32.0px;background:#454545;border-radius:3px"></div><div class="btn" style="left:11.4px;top:32.0px;width:39.2px;height:25.1px;"></div>
<svg style="left:16px;top:35px" width="20" height="19" viewBox="0 0 20 19"><g class="ic" stroke-width="1.2"><path d="M1 13.3h17M3.2 9.6h10M6.5 7.2 3.6 17M13.6 10 14.6 17"/></g><circle cx="13.6" cy="5" r="4" fill="#e2e2e2"/><path d="M11.3 4.2a2.6 2.6 0 0 1 2-1.7" stroke="#666" stroke-width=".9" fill="none"/></svg>
<svg class="a" style="left:0;top:0" width="1" height="1"><path class="chev" style="" d="M39.0 43.9 l3.8 3.8 l3.8 -3.8"/></svg>
<div class="btn" style="left:57.3px;top:32.0px;width:136.3px;height:25.1px;"></div>
<svg style="left:62px;top:35px" width="20" height="19" viewBox="0 0 20 19"><rect x="5" y="4.5" width="10" height="10" fill="#e4e4e4"/><path d="M1.2 5.2V1.2h4M14.8 1.2h4v4M18.8 13.8v4h-4M5.2 17.8h-4v-4" fill="none" stroke="#b8b8b8" stroke-width="1.3"/></svg>
<div class="t " style="left:89.7px;top:36.6px;letter-spacing:-0.191px;">Object Mode</div>
<svg class="a" style="left:0;top:0" width="1" height="1"><path class="chev" style="" d="M182.1 43.9 l3.8 3.8 l3.8 -3.8"/></svg>
<div class="t " style="left:208.9px;top:36.6px;letter-spacing:-0.190px;">View</div>
<div class="t " style="left:258.9px;top:36.6px;letter-spacing:-0.285px;">Select</div>
<div class="t " style="left:316.6px;top:36.6px;letter-spacing:-0.191px;">Add</div>
<div class="t " style="left:360.9px;top:36.6px;letter-spacing:-0.291px;">Object</div>
<div class="btn" style="left:636.2px;top:32.0px;width:99.6px;height:25.1px;"></div>
<svg style="left:640px;top:34px" width="22" height="21" viewBox="0 0 22 21"><g class="ic" stroke-width="1.25"><path d="M4.6 16.2V2.6M2.3 5 4.6 2.3 6.9 5M6.3 17.6h13M17 15.3l2.6 2.3L17 19.9M5.8 16.4 14.6 5.6M10.6 5.3h4.2v4.2"/><circle cx="4.6" cy="17.6" r="1.7" fill="#282828"/></g></svg>
<div class="t " style="left:668.8px;top:36.6px;letter-spacing:-0.214px;">Global</div>
<svg class="a" style="left:0;top:0" width="1" height="1"><path class="chev" style="" d="M724.0 43.9 l3.8 3.8 l3.8 -3.8"/></svg>
<div class="btn" style="left:742.1px;top:32.0px;width:39.9px;height:25.1px;"></div>
<svg style="left:747px;top:34px" width="20" height="21" viewBox="0 0 20 21"><g class="ic" stroke-width="1.35"><circle cx="13.4" cy="6.5" r="5"/><circle cx="6.9" cy="13.7" r="5.2"/></g><circle cx="10.5" cy="10.1" r="2.2" fill="#e4e4e4" stroke="#282828" stroke-width="1.1"/></svg>
<svg class="a" style="left:0;top:0" width="1" height="1"><path class="chev" style="" d="M769.5 43.9 l3.8 3.8 l3.8 -3.8"/></svg>
<div class="btn" style="left:788.5px;top:32.0px;width:64.3px;height:25.1px;"></div>
<div class="lbtn" style="left:788.9px;top:33.0px;width:23.6px;height:23.0px;border-radius:4px 0 0 4px"></div>
<svg style="left:791px;top:34px" width="20" height="21" viewBox="0 0 20 21"><g fill="none" stroke="#a8a8a8" stroke-width="1.25" stroke-linejoin="round"><path d="M2 7.2 5 10.2 8.6 6.6A3.4 3.4 0 0 1 13.4 11.4L9.8 15l3 3 3.8-3.8A8 8 0 0 0 5.4 3.4Z"/><path d="M3.6 8.8 6.6 5.8M11.4 16.6l3-3"/></g></svg>
<svg style="left:815px;top:35px" width="21" height="19" viewBox="0 0 21 19"><g class="ic" stroke-width="1.25"><path d="M1 12.6h18M1 9v7M7 10.4v4.4M13 10.4v4.4M19 9v7"/></g><rect x="15.2" y="1.6" width="4.6" height="4.6" fill="#e0e0e0"/></svg>
<svg class="a" style="left:0;top:0" width="1" height="1"><path class="chev" style="" d="M841.0 43.9 l3.8 3.8 l3.8 -3.8"/></svg>
<div class="btn" style="left:859.2px;top:32.0px;width:64.3px;height:25.1px;"></div>
<div class="lbtn" style="left:859.6px;top:33.0px;width:23.4px;height:23.0px;border-radius:4px 0 0 4px"></div>
<svg style="left:861px;top:34px" width="21" height="21" viewBox="0 0 21 21"><circle cx="10.5" cy="10.5" r="7" fill="none" stroke="#8e8e8e" stroke-width="1.2"/><circle cx="10.5" cy="10.5" r="2.2" fill="#c8c8c8"/></svg>
<svg style="left:887px;top:35px" width="22" height="19" viewBox="0 0 22 19"><path d="M1.6 16.4C8 16.4 7.6 2.8 10.9 2.8S13.8 16.4 20.2 16.4" fill="none" stroke="#b0b0b0" stroke-width="1.25" stroke-linecap="round"/></svg>
<svg class="a" style="left:0;top:0" width="1" height="1"><path class="chev" style="stroke:#5a5a5a;" d="M912.1 43.9 l3.8 3.8 l3.8 -3.8"/></svg>
<div class="btn" style="left:1265.1px;top:32.0px;width:39.7px;height:25.1px;"></div>
<svg style="left:1267px;top:34px" width="24" height="21" viewBox="0 0 24 21"><path d="M5.8 6.200Q12.7-2.2 19.6 6.200Q12.7 13.6 5.8 6.200Z" fill="#e4e4e4"/><circle cx="12.7" cy="5.6" r="3" fill="#282828"/><circle cx="12.7" cy="5.6" r="1.3" fill="#e4e4e4"/><path d="M1.7 9.8 12.4 13.7 8 15.5 6.1 19.400Z" fill="#e4e4e4" stroke="#282828" stroke-width=".9"/></svg>
<svg class="a" style="left:0;top:0" width="1" height="1"><path class="chev" style="" d="M1292.8 43.9 l3.8 3.8 l3.8 -3.8"/></svg>
<div class="btn" style="left:1311.5px;top:32.0px;width:49.2px;height:25.1px;"></div>
<div class="blue" style="left:1311.9px;top:33.0px;width:23.1px;height:23.0px;border-radius:4px 0 0 4px"></div>
<svg style="left:1313px;top:34px" width="21" height="21" viewBox="0 0 21 21"><g fill="none" stroke="#f0f0f0" stroke-width="1.3" stroke-linecap="round" stroke-linejoin="round"><path d="M2.2 4.6C9.6 4.6 15.6 10.4 15.6 18.4M6.8 14 17.6 3.2M12.6 2.8h5.2v5.2"/><circle cx="5" cy="15.8" r="2.1"/></g></svg>
<svg class="a" style="left:0;top:0" width="1" height="1"><path class="chev" style="" d="M1343.8 43.9 l3.8 3.8 l3.8 -3.8"/></svg>
<div class="btn" style="left:1367.5px;top:32.0px;width:49.1px;height:25.1px;"></div>
<div class="blue" style="left:1367.9px;top:33.0px;width:23.1px;height:23.0px;border-radius:4px 0 0 4px"></div>
<svg style="left:1369px;top:34px" width="21" height="21" viewBox="0 0 21 21"><circle cx="12.6" cy="7.6" r="5.6" fill="#f2f2f2"/><path d="M6 7.2A5.6 5.6 0 1 0 13.6 14.8" fill="none" stroke="#f2f2f2" stroke-width="1.3" stroke-linecap="round"/><path d="M8 9.4A5 5 0 0 0 11.6 13" fill="none" stroke="#4772b3" stroke-width="1.3"/></svg>
<svg class="a" style="left:0;top:0" width="1" height="1"><path class="chev" style="" d="M1399.8 43.9 l3.8 3.8 l3.8 -3.8"/></svg>
<div class="lbtn" style="left:1424.0px;top:33.0px;width:23.0px;height:23.0px;border-radius:4px"></div>
<svg style="left:1425px;top:34px" width="21" height="21" viewBox="0 0 21 21"><path d="M7.4 5.6V2.5h11.3v11.3h-2.6" fill="none" stroke="#c4c4c4" stroke-width="1"/><rect x="2.3" y="6.4" width="13" height="11.9" fill="none" stroke="#ececec" stroke-width="1.4"/><path d="M7.4 8.2v5.2h5" stroke="#e0e0e0" stroke-width="1.2" fill="none" stroke-dasharray="2.2 1.4"/></svg>
<div class="btn" style="left:1454.6px;top:32.0px;width:120.6px;height:25.1px;"></div>
<div class="lbtn" style="left:1455.0px;top:33.0px;width:23.7px;height:23.0px;border-radius:4px 0 0 4px"></div>
<div class="blue" style="left:1478.9px;top:33.0px;width:23.3px;height:23.0px;"></div>
<div class="lbtn" style="left:1502.6px;top:33.0px;width:23.6px;height:23.0px;"></div>
<div class="lbtn" style="left:1526.9px;top:33.0px;width:23.3px;height:23.0px;"></div>
<svg style="left:1456px;top:34px" width="21" height="21" viewBox="0 0 21 21"><g fill="none" stroke="#c8c8c8" stroke-width="1.2"><circle cx="10.5" cy="10.5" r="7.8"/><path d="M10.5 2.9v15.2M3.2 8.4h14.6M4 14.6h13"/></g></svg>
<svg style="left:1480px;top:34px" width="21" height="21" viewBox="0 0 21 21"><circle cx="10.5" cy="10.5" r="8" fill="#fff"/></svg>
<svg style="left:1504px;top:34px" width="21" height="21" viewBox="0 0 21 21"><circle cx="10.5" cy="10.5" r="7.6" fill="none" stroke="#d8d8d8" stroke-width="1.2"/><path d="M10.5 2.9A7.6 7.6 0 0 0 3.6 13.6L10.5 10.5Z" fill="#d8d8d8"/><path d="M10.5 10.5 16.6 15M9 13.6l4.6 3.6M6.4 14.6l3.6 3" stroke="#d8d8d8" stroke-width="1.1" fill="none"/></svg>
<svg style="left:1528px;top:34px" width="21" height="21" viewBox="0 0 21 21"><circle cx="10.5" cy="10.5" r="7.6" fill="none" stroke="#d8d8d8" stroke-width="1.2"/><path d="M5.6 8.8A5.2 5.2 0 0 1 9.6 5" stroke="#d8d8d8" stroke-width="1.6" fill="none" stroke-linecap="round"/><path d="M13.4 16l1.2 1.2M15.4 14.4l1.2 1.2M16.8 12.2l1 1" stroke="#d8d8d8" stroke-width="1" fill="none"/></svg>
<svg class="a" style="left:0;top:0" width="1" height="1"><path class="chev" style="" d="M1558.8 43.9 l3.8 3.8 l3.8 -3.8"/></svg>
<div class="t " style="left:55.1px;top:69.9px;letter-spacing:-0.315px;color:#d4d4d4">Orientation:</div>
<div class="btn" style="left:136.4px;top:65.3px;width:124.2px;height:24.7px;"></div>
<svg style="left:140px;top:67px" width="22" height="21" viewBox="0 0 22 21"><g class="ic" stroke-width="1.05" stroke="#c8c8c8"><path d="M7.6 9.4V2M5.6 4.2 7.6 2l2 2.2M10.4 12.6h8.2M16.4 10.6l2.2 2-2.2 2M5.4 14.6 2 18M2 15.2V18h2.8"/></g><circle cx="7.6" cy="12.6" r="2" fill="#e0e0e0"/></svg>
<div class="t " style="left:169.0px;top:69.9px;letter-spacing:-0.300px;">Default</div>
<svg class="a" style="left:0;top:0" width="1" height="1"><path class="chev" style="" d="M248.4 77.3 l3.8 3.8 l3.8 -3.8"/></svg>
<div class="t " style="left:276.9px;top:69.9px;letter-spacing:-0.291px;color:#d4d4d4">Drag:</div>
<div class="btn" style="left:323.4px;top:65.3px;width:95.4px;height:24.7px;"></div>
<div class="t " style="left:333.0px;top:69.9px;letter-spacing:-0.161px;">Select Box</div>
<svg class="a" style="left:0;top:0" width="1" height="1"><path class="chev" style="" d="M406.9 77.3 l3.8 3.8 l3.8 -3.8"/></svg>
<div class="btn" style="left:1496.6px;top:65.3px;width:79.9px;height:24.7px;"></div>
<div class="t " style="left:1505.6px;top:69.9px;letter-spacing:-0.267px;">Options</div>
<svg class="a" style="left:0;top:0" width="1" height="1"><path class="chev" style="" d="M1564.8 77.5 l3.8 3.8 l3.8 -3.8"/></svg><div class="tool" style="left:10.9px;top:102.5px;width:48.3px;height:41.8px;border-radius:5px 0 0 5px"></div>
<div class="tool" style="left:60.2px;top:102.5px;width:49.0px;height:41.8px;border-radius:0 5px 5px 0"></div>
<div class="blue" style="left:10.9px;top:152.0px;width:48.3px;height:41.0px;border-radius:5px 0 0 0"></div>
<div class="tool" style="left:60.2px;top:152.0px;width:49.0px;height:41.0px;border-radius:0 5px 0 0"></div>
<div class="tool" style="left:10.9px;top:194.0px;width:48.3px;height:42.3px;border-radius:0 0 0 5px"></div>
<div class="tool" style="left:60.2px;top:194.0px;width:49.0px;height:42.3px;border-radius:0 0 5px 0"></div>
<div class="tool" style="left:10.9px;top:243.8px;width:48.3px;height:41.3px;border-radius:5px 0 0 5px"></div>
<div class="tool" style="left:60.2px;top:243.8px;width:49.0px;height:41.3px;border-radius:0 5px 5px 0"></div>
<div class="tool" style="left:10.9px;top:292.8px;width:48.3px;height:41.0px;border-radius:5px"></div>
<svg style="left:19px;top:107px" width="32" height="32" viewBox="0 0 32 32"><rect x="3" y="3" width="26" height="26" rx="1.5" fill="none" stroke="#d9a85a" stroke-width="2" stroke-dasharray="5 2.4"/><path d="M12.4 10.2 22.4 17.4 16.4 18.4 12.6 23.4Z" fill="#e6e6e6"/></svg>
<svg style="left:49.8px;top:135.5px" width="6" height="6"><path d="M5.5 0.5V5.5H0.5Z" fill="#8a8a8a"/></svg>
<svg style="left:68px;top:107px" width="32" height="32" viewBox="0 0 32 32"><circle cx="16" cy="16" r="13.8" fill="none" stroke="#f4f4f4" stroke-width="1.8"/><circle cx="16" cy="16" r="13.8" fill="none" stroke="#c8454d" stroke-width="1.8" stroke-dasharray="5.4 5.44" stroke-dashoffset="2.7"/><path d="M16 7v6.2M16 18.8V25M7 16h6.2M18.8 16H25" stroke="#9a9a9a" stroke-width="1.6" fill="none"/></svg>
<svg style="left:19px;top:156px" width="32" height="32" viewBox="0 0 32 32"><g fill="#ececec"><path d="M16 1.6 19.8 7.4H12.2Z"/><path d="M16 30.4 19.8 24.6H12.2Z"/><path d="M1.6 16 7.4 12.2V19.8Z"/><path d="M30.4 16 24.6 12.2V19.8Z"/><rect x="15.1" y="8.6" width="1.8" height="3.8"/><rect x="15.1" y="19.6" width="1.8" height="3.8"/><rect x="8.6" y="15.1" width="3.8" height="1.8"/><rect x="19.6" y="15.1" width="3.8" height="1.8"/></g></svg>
<svg style="left:68px;top:156px" width="32" height="32" viewBox="0 0 32 32"><g fill="none" stroke="#ececec" stroke-width="1.5"><path d="M5.6 13.6A11 11 0 0 1 24.6 9"/><path d="M26.4 18.6A11 11 0 0 1 8 23.6"/></g><path d="M1.4 15.6h8.2l-4.1 5.6Z" fill="#ececec"/><path d="M30.6 16.6h-8.2l4.1-5.6Z" fill="#ececec"/><path d="M16 11.6 20.6 16.2 16 20.8 11.4 16.2Z" fill="#bdbdbd"/></svg>
<svg style="left:19px;top:199px" width="32" height="32" viewBox="0 0 32 32"><path d="M7.6 11V5.4H27v19.4H21.6" fill="none" stroke="#a6a6a6" stroke-width="1.5"/><rect x="5.2" y="14.4" width="12.6" height="12.6" fill="#ececec"/><path d="M18.4 13.8 24 8.2" stroke="#ececec" stroke-width="1.6"/><path d="M20.2 7h5v5Z" fill="#ececec"/></svg>
<svg style="left:49.8px;top:227.5px" width="6" height="6"><path d="M5.5 0.5V5.5H0.5Z" fill="#8a8a8a"/></svg>
<svg style="left:68px;top:199px" width="32" height="32" viewBox="0 0 32 32"><g fill="none" stroke="#ececec" stroke-width="1.4"><path d="M6.6 11A11.2 11.2 0 0 1 11 6.6M21 6.6A11.2 11.2 0 0 1 25.4 11M25.4 21A11.2 11.2 0 0 1 21 25.4M11 25.4A11.2 11.2 0 0 1 6.6 21"/></g><g fill="#ececec"><rect x="11.4" y="11.4" width="9.2" height="9.2"/><path d="M16 2.6 19 7.4H13Z"/><path d="M16 29.4 19 24.6H13Z"/><path d="M2.6 16 7.4 13V19Z"/><path d="M29.4 16 24.6 13V19Z"/></g></svg>
<svg style="left:19px;top:248px" width="32" height="32" viewBox="0 0 32 32"><path d="M4 25.2C9.4 29.8 13 26.6 16.8 22.8S25.4 16.8 31 25" fill="none" stroke="#8fdcb0" stroke-width="1.7" stroke-linecap="round"/><path d="M2.4 24.4 2.8 19.8 18.4 3.2 22.6 7.2 7 23.6Z" fill="#ececec"/><path d="M16.4 5.4l4 3.8" stroke="#2a2a2a" stroke-width="1"/><path d="M3.8 19.8l3.6 3.4" stroke="#2a2a2a" stroke-width="1"/></svg>
<svg style="left:49.8px;top:276.3px" width="6" height="6"><path d="M5.5 0.5V5.5H0.5Z" fill="#8a8a8a"/></svg>
<svg style="left:68px;top:248px" width="32" height="32" viewBox="0 0 32 32"><path d="M11.6 26.4V11.4A15 15 0 0 1 26.4 26.4Z" fill="#8fdcb0"/><path d="M11.6 13.6A12.8 12.8 0 0 1 24.2 26.4" fill="none" stroke="#2a2a2a" stroke-width="1.1"/><path d="M5 2.4h6.4v1.4H9.8V26.6H5.6V3.8H5Z" fill="#ececec"/><path d="M3.4 28.8v-1.6h3.4V25H29.4v4.8H3.4Z" fill="#ececec" transform="translate(0,-0.6)"/><path d="M7.4 6h1.6M7.4 8.4h1.6M7.4 10.8h1.6M7.4 13.2h1.6M7.4 15.6h1.6M7.4 18h1.6M7.4 20.4h1.6M7.4 22.8h1.6M12.4 26v1.6M14.8 26v1.6M17.2 26v1.6M19.6 26v1.6M22 26v1.6M24.4 26v1.6M26.8 26v1.6" stroke="#2a2a2a" stroke-width=".9"/></svg>
<svg style="left:19px;top:297px" width="32" height="32" viewBox="0 0 32 32"><g fill="none" stroke="#8fdcb0" stroke-width="1.2" stroke-linejoin="round"><path d="M6.8 12.1 12.8 6.600h18L24.8 12.100ZM6.8 12.100h18V29.600h-18ZM24.8 12.1 30.8 6.600V24.100L24.8 29.6"/></g><path d="M5.4 .6v9.800M.5 5.500h9.8" stroke="#8fdcb0" stroke-width="2.2"/></svg>
<svg style="left:49.8px;top:325.0px" width="6" height="6"><path d="M5.5 0.5V5.5H0.5Z" fill="#8a8a8a"/></svg><div class="t " style="left:131.6px;top:105.5px;letter-spacing:-0.016px;color:#f4f4f4;-webkit-text-stroke:.4px #f4f4f4;text-shadow:0 0 2px rgba(0,0,0,.55),1px 1px 1px rgba(0,0,0,.45)">User Perspective</div>
<div class="t " style="left:131.6px;top:128.5px;letter-spacing:-0.222px;color:#f4f4f4;-webkit-text-stroke:.4px #f4f4f4;text-shadow:0 0 2px rgba(0,0,0,.55),1px 1px 1px rgba(0,0,0,.45)">(0) Collection | Sphere</div><svg style="left:0;top:0" width="1594" height="933" viewBox="0 0 1594 933">
<circle cx="1249.4" cy="154.8" r="9.8" fill="none" stroke="#b03a52" stroke-width="1.2"/>
<path d="M1248.9 153V114" stroke="#307dd7" stroke-width="2.2"/>
<path d="M1247.4 153.9H1289" stroke="#78b914" stroke-width="2.2"/>
<circle cx="1209.1" cy="153.9" r="9.3" fill="#52662a" stroke="#7ab51a" stroke-width="1.2"/>
<circle cx="1248.9" cy="193.9" r="9.3" fill="#3a5276" stroke="#3a80d8" stroke-width="1.2"/>
<circle cx="1248.9" cy="113.8" r="9.9" fill="#307dd7"/>
<circle cx="1288.9" cy="153.9" r="9.9" fill="#78b914"/>
<circle cx="1247.3" cy="152.9" r="10.8" fill="#fc3755"/>
<g font-family="DejaVu Sans,Liberation Sans,sans-serif" font-weight="bold" font-size="13.2" text-anchor="middle" fill="#101010">
<text x="1248.9" y="118.6" fill="#0f2850">Z</text><text x="1289" y="158.9" fill="#233705">Y</text><text x="1247.3" y="157.7" fill="#5a0a19">X</text></g>
<g fill="#262626" opacity=".92"><circle cx="1283" cy="222.5" r="17"/><circle cx="1283" cy="259.8" r="17"/><circle cx="1283" cy="297.4" r="17"/><circle cx="1283" cy="334.8" r="17"/></g>
<!-- zoom -->
<g><circle cx="1285" cy="221.4" r="7.9" fill="#e2e2e2"/><path d="M1279 227.4 1273.9 232.3" stroke="#e2e2e2" stroke-width="2.8" stroke-linecap="round"/><path d="M1281 221.4h8M1285 217.4v8" stroke="#262626" stroke-width="1.5"/></g>
<!-- hand -->
<g transform="translate(1283.3 260)" fill="#e2e2e2"><path d="M-4.4 9.200C-6.6 7-9.4 3.6-10.8 1.400c-.9-1.5.9-2.7 2.2-1.500l2.8 2.7-1.3-8.800c-.2-1.7 2.1-2.1 2.5-.400l1.5 6.4-.200-9.100c0-1.8 2.5-1.8 2.6 0l.5 8.9 1.5-8.200c.3-1.7 2.7-1.4 2.5.400l-.9 8.6 2.3-5.500c.7-1.6 2.9-.8 2.4.9L5.6 4.400C5 7 4.4 8.2 3.6 9.200Z"/></g>
<!-- camera -->
<g fill="#e2e2e2"><circle cx="1277.3" cy="294.4" r="3.9"/><circle cx="1285.8" cy="293.5" r="4.9"/><rect x="1276.6" y="300.8" width="11.4" height="7.4" rx="1"/><path d="M1288.4 304.6 1293.3 301.500V308Z"/><rect x="1274.8" y="302.6" width="2.4" height="3.4"/><circle cx="1277.3" cy="294.4" r="1.2" fill="#262626"/><circle cx="1286.2" cy="293" r="1.3" fill="#262626"/></g>
<!-- grid -->
<g fill="none" stroke="#e2e2e2" stroke-width="1.8" stroke-linejoin="round"><path d="M1279 327.800h9.400l4.6 15.400h-20ZM1277.4 332.600h12.800M1275.6 337.600h16.200M1282 327.800l-2.2 15.400M1285.4 327.800l2.2 15.4"/></g>
</svg><div class="a" style="left:1560.0px;top:92.8px;width:28.0px;height:804.2px;background:#181818"></div>
<div class="a" style="left:1321.2px;top:94.0px;width:230.2px;height:30.8px;background:#3f3f3f;border-radius:5px"></div>
<svg style="left:0;top:0" width="1" height="1"><path d="M1335.2 104.600l4.6 5.1-4.6 5.1" fill="none" stroke="#d0d0d0" stroke-width="1.2" stroke-linecap="round" stroke-linejoin="round"/><g fill="#8c8c8c"><rect x="1527.4" y="106.8" width="2" height="2"/><rect x="1531.4" y="106.8" width="2" height="2"/><rect x="1535.4" y="106.8" width="2" height="2"/><rect x="1539.4" y="106.8" width="2" height="2"/><rect x="1527.4" y="110.6" width="2" height="2"/><rect x="1531.4" y="110.6" width="2" height="2"/><rect x="1535.4" y="110.6" width="2" height="2"/><rect x="1539.4" y="110.6" width="2" height="2"/></g></svg>
<div class="t " style="left:1347.8px;top:101.9px;letter-spacing:0.081px;color:#e6e6e6">Transform</div>
<div class="a" style="left:1559.0px;top:98.7px;width:23.0px;height:49.3px;background:#303030;border:1px solid #3e3e3e;border-left:none;border-radius:0 5px 5px 0"></div>
<div class="a" style="left:1560.0px;top:153.0px;width:22.0px;height:47.0px;background:#222;border:1px solid #383838;border-left:none;border-radius:0 5px 5px 0"></div>
<div class="a" style="left:1560.0px;top:205.0px;width:22.0px;height:50.5px;background:#222;border:1px solid #383838;border-left:none;border-radius:0 5px 5px 0"></div>
<div class="t" style="left:1571px;top:108.6px;transform-origin:0 0;transform:rotate(90deg) translate(0,-8.500px);color:#ececec">Item</div>
<div class="t" style="left:1571px;top:164.0px;transform-origin:0 0;transform:rotate(90deg) translate(0,-8.500px);color:#d0d0d0">Tool</div>
<div class="t" style="left:1571px;top:215.4px;transform-origin:0 0;transform:rotate(90deg) translate(0,-8.500px);color:#d0d0d0">View</div><svg style="left:0;top:0" width="1594" height="933" viewBox="0 0 1594 933">
<path d="M774.5 728.4 L767.4 752.6" stroke="#a03a48" stroke-width="1.2" fill="none"/>
<circle cx="779.2" cy="708.6" r="11.6" fill="none" stroke="#fff" stroke-width="1.5"/>
<circle cx="779.2" cy="708.6" r="11.6" fill="none" stroke="#e8242c" stroke-width="1.5" stroke-dasharray="4.555 4.555" stroke-dashoffset="2.3"/>
<path d="M779.4 683.500V702M779.4 715V733.700M755 708.800H772.600M786 708.800H804.3" stroke="#1e1e1e" stroke-width="1"/>
<path d="M780.6 704.5 778 712.5" stroke="#2a2a2a" stroke-width="1"/>
</svg><div id="tl"></div><div class="btn" style="left:10.8px;top:904.3px;width:38.4px;height:24.0px;"></div>
<svg style="left:15px;top:907px" width="20" height="19" viewBox="0 0 20 19"><circle cx="10" cy="9.5" r="8.7" fill="#e6e6e6"/><path d="M12.6 4 8.2 10.2 11.8 15.6" fill="none" stroke="#282828" stroke-width="2.2" stroke-linejoin="round"/></svg>
<svg class="a" style="left:0;top:0" width="1" height="1"><path class="chev" style="" d="M38.2 916.1 l3.8 3.8 l3.8 -3.8"/></svg>
<div class="btn" style="left:56.7px;top:904.3px;width:163.4px;height:24.0px;"></div>
<div class="a" style="left:144.2px;top:905.3px;width:1.0px;height:22.0px;background:#3c3c3c"></div>
<div class="t " style="left:65.8px;top:908.4px;letter-spacing:-0.139px;">Playback</div>
<svg class="a" style="left:0;top:0" width="1" height="1"><path class="chev" style="" d="M133.1 916.1 l3.8 3.8 l3.8 -3.8"/></svg>
<div class="t " style="left:154.0px;top:908.4px;letter-spacing:0.038px;">Keying</div>
<svg class="a" style="left:0;top:0" width="1" height="1"><path class="chev" style="" d="M209.1 916.1 l3.8 3.8 l3.8 -3.8"/></svg>
<div class="t " style="left:232.2px;top:908.4px;letter-spacing:-0.240px;">View</div>
<div class="t " style="left:282.0px;top:908.4px;letter-spacing:-0.123px;">Marker</div>
<div class="btn" style="left:678.1px;top:904.3px;width:48.3px;height:24.0px;"></div>
<div class="lbtn" style="left:678.1px;top:904.9px;width:23.3px;height:22.8px;border-radius:4px 0 0 4px"></div>
<svg style="left:0;top:0" width="1" height="1"><circle cx="689.4" cy="916.6" r="5.1" fill="#e8e8e8"/></svg>
<svg class="a" style="left:0;top:0" width="1" height="1"><path class="chev" style="stroke:#5c5c5c;" d="M710.4 915.6 l3.2 3.4 l3.2 -3.4"/></svg>
<div class="lbtn" style="left:734.0px;top:904.9px;width:23.2px;height:22.8px;border-radius:4px 0 0 4px"></div>
<div class="lbtn" style="left:757.8px;top:904.9px;width:24.4px;height:22.8px;border-radius:0"></div>
<div class="lbtn" style="left:782.8px;top:904.9px;width:24.3px;height:22.8px;border-radius:0"></div>
<div class="lbtn" style="left:807.7px;top:904.9px;width:24.4px;height:22.8px;border-radius:0"></div>
<div class="lbtn" style="left:832.7px;top:904.9px;width:24.5px;height:22.8px;border-radius:0"></div>
<div class="lbtn" style="left:857.8px;top:904.9px;width:23.8px;height:22.8px;border-radius:0 4px 4px 0"></div>
<svg style="left:0;top:0" width="1" height="1"><g fill="#ebebeb"><rect x="738.9" y="910.2" width="3.1" height="12.8"/><path d="M742.9 916.6L750.7 911.6V921.6Z"/><path d="M760.1 916.6l5.4-6.4 5.4 6.4-5.4 6.4Z"/><path d="M772.4 916.6L779 911.3V921.9Z"/><path d="M788.8 916.6L801 909.0V924.2Z"/><path d="M826.2 916.6L813.9 909.0V924.2Z"/><path d="M854.9 916.6l-5.4-6.4-5.4 6.4 5.4 6.4Z"/><path d="M842.4 916.6L836.1 911.3V921.9Z"/><rect x="873.6" y="910.2" width="3.1" height="12.8"/><path d="M872.9 916.6L865 911.6V921.6Z"/></g></svg>
<div class="lbtn" style="left:1234.6px;top:904.9px;width:92.1px;height:22.8px;border-radius:4px"></div>
<div class="t " style="left:1276.4px;top:908.4px;">0</div>
<div class="lbtn" style="left:1333.3px;top:904.9px;width:24.0px;height:22.8px;border-radius:4px 0 0 4px"></div>
<svg style="left:1335px;top:906px" width="21" height="21" viewBox="0 0 21 21"><g fill="none" stroke="#e6e6e6" stroke-width="1.3" stroke-linecap="round"><circle cx="10" cy="12" r="6.8"/><path d="M10 8v4.200h3.400M7.4 2.600h5.200M10 2.800v2.400M16 5.600l2-2.4"/></g></svg>
<div class="lbtn" style="left:1357.9px;top:904.9px;width:111.5px;height:22.8px;border-radius:0"></div>
<div class="lbtn" style="left:1470.0px;top:904.9px;width:105.4px;height:22.8px;border-radius:0 4px 4px 0"></div>
<div class="t " style="left:1376.6px;top:908.4px;letter-spacing:-0.173px;">Start</div>
<div class="t " style="left:1443.2px;top:908.4px;">1</div>
<div class="t " style="left:1489.0px;top:908.4px;letter-spacing:-0.273px;">End</div>
<div class="t " style="left:1534.0px;top:908.4px;letter-spacing:-0.076px;">250</div></body></html>
